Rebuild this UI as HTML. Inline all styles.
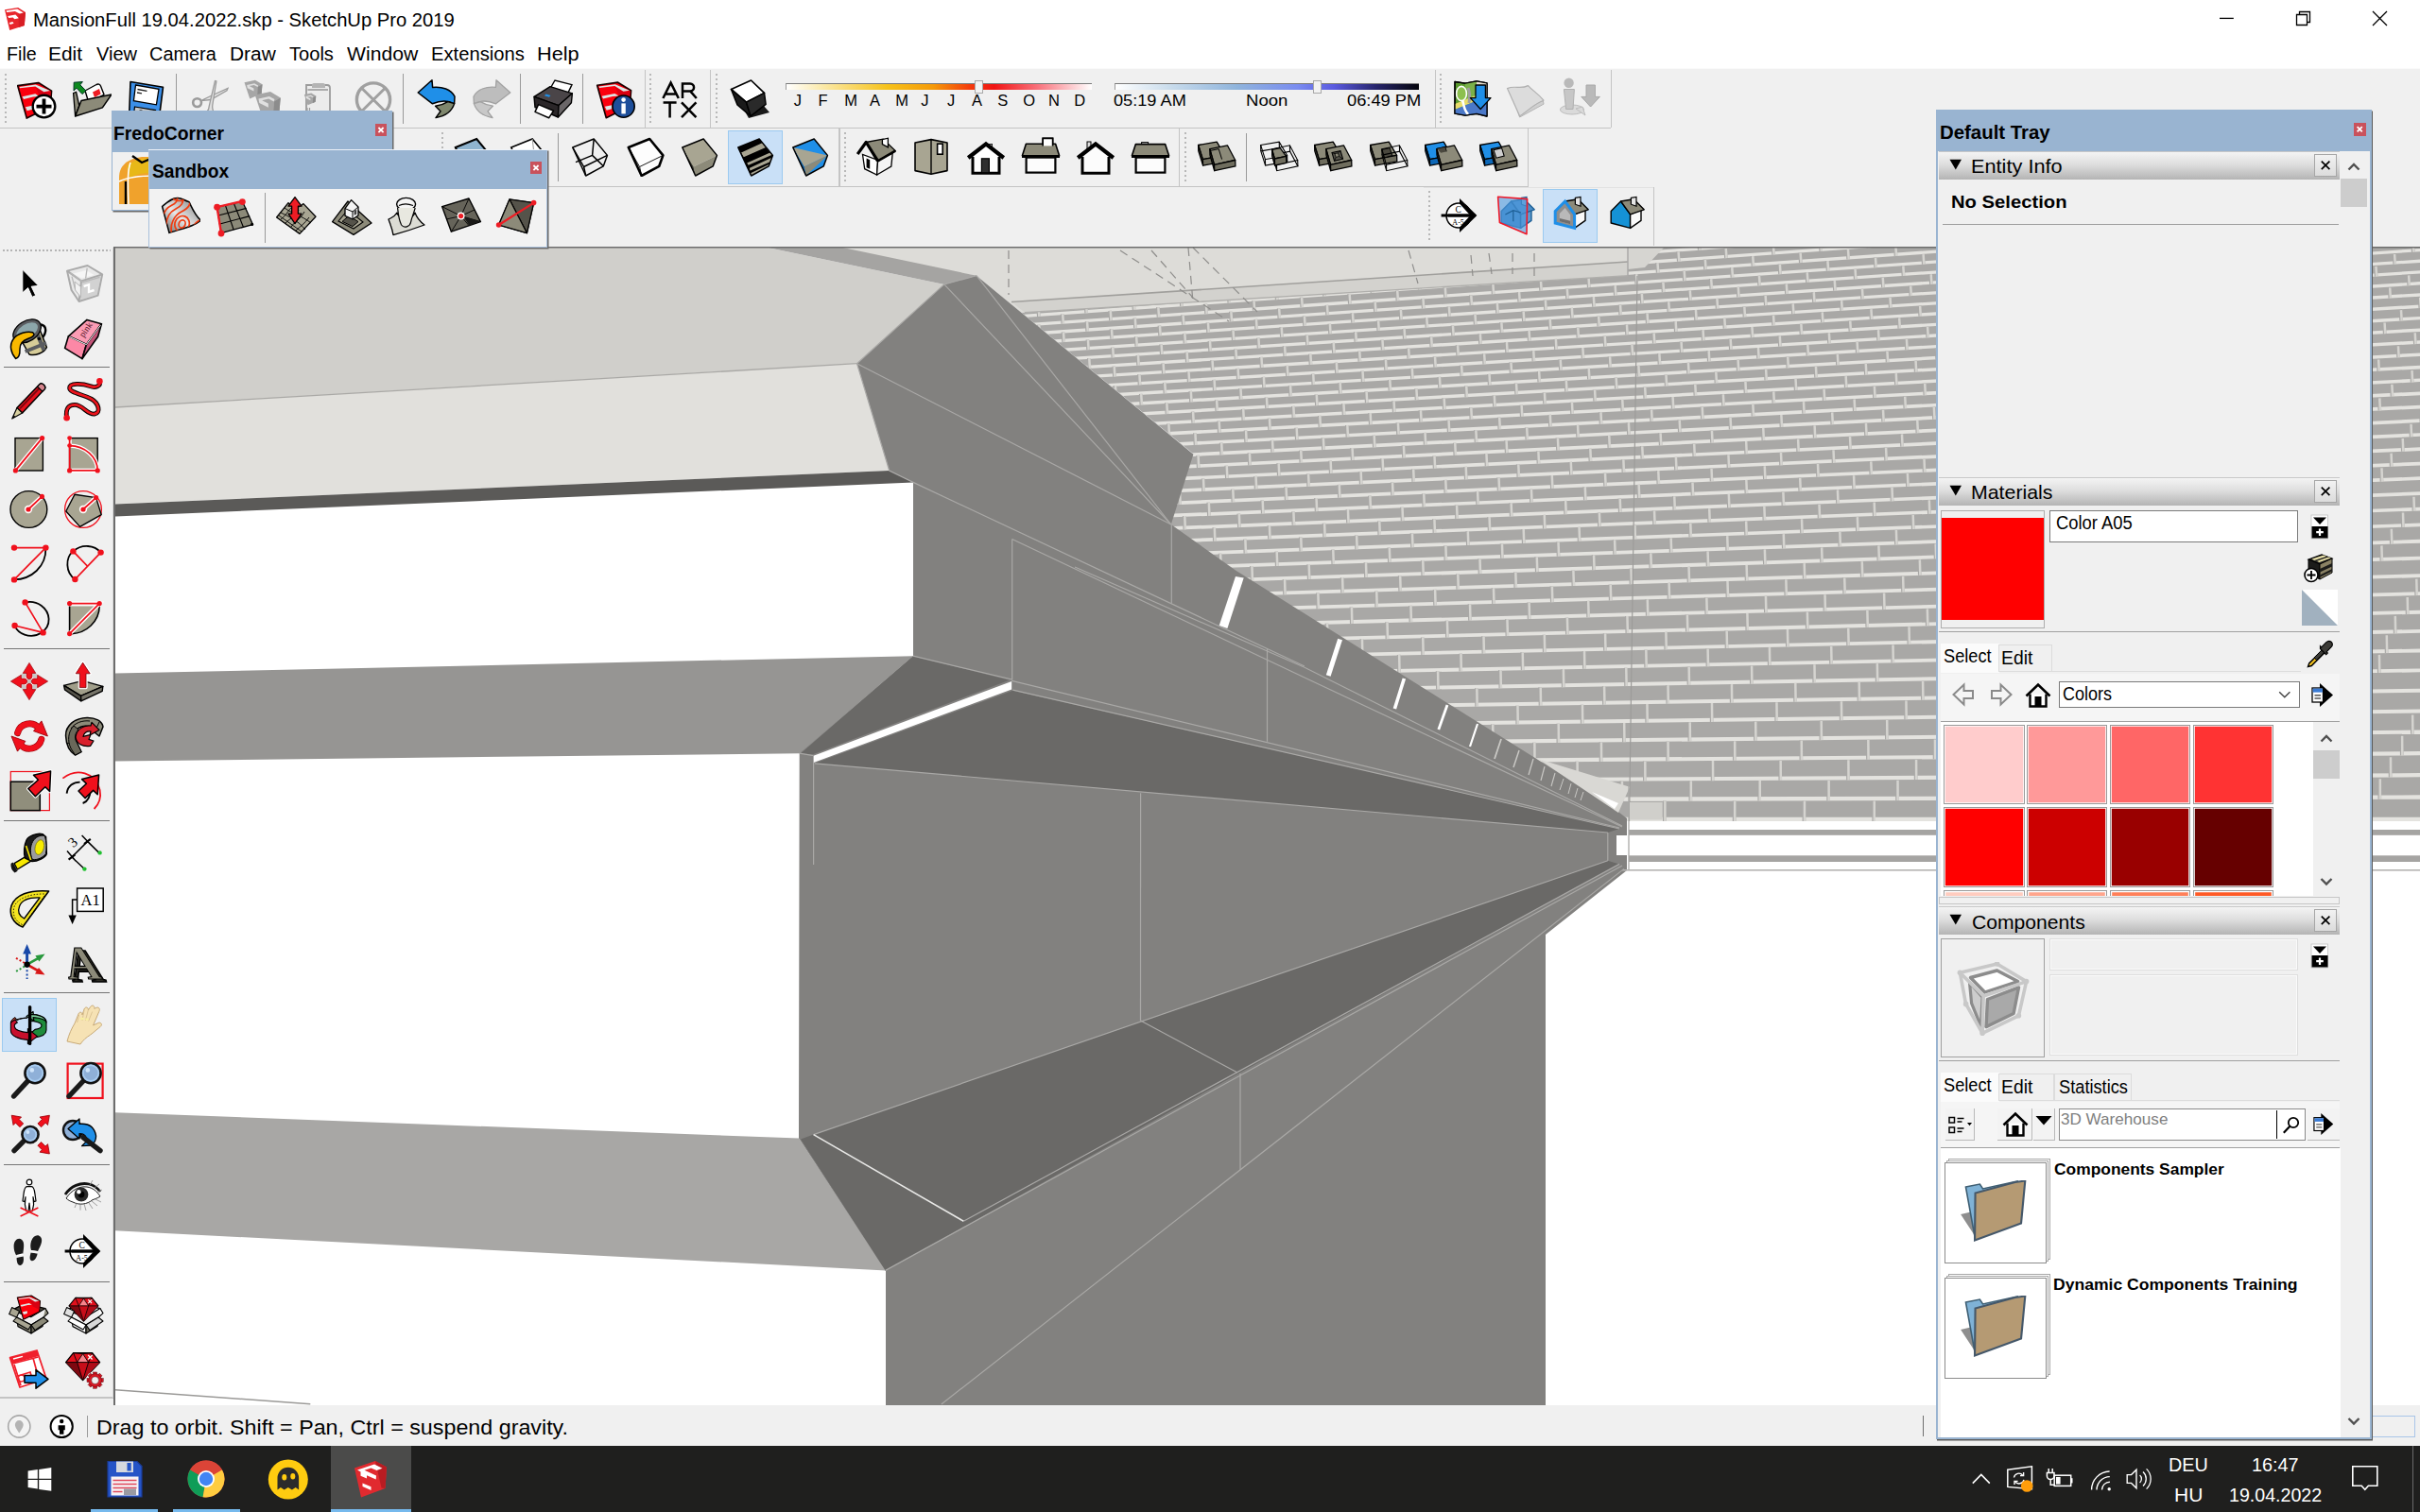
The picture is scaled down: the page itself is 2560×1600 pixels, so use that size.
<!DOCTYPE html>
<html><head><meta charset="utf-8"><title>MansionFull 19.04.2022.skp - SketchUp Pro 2019</title>
<style>
html,body{margin:0;padding:0;background:#f0f0f0;}
body{width:2560px;height:1600px;overflow:hidden;position:relative;font-family:"Liberation Sans",sans-serif;}
#root{position:absolute;left:0;top:0;width:2560px;height:1600px;overflow:hidden;background:#f0f0f0;}
.b{position:absolute;box-sizing:border-box;display:block;}
.t{position:absolute;white-space:nowrap;line-height:1;transform-origin:0 50%;display:inline-block;}
</style></head><body><div id="root">
<div class="b" style="left:0.0px;top:0.0px;width:2560.0px;height:72.0px;background:#ffffff;"></div>
<span class="t" style="left:35.08px;top:11.3px;font-size:20.5px;color:#000;transform:scaleX(0.9854);">MansionFull 19.04.2022.skp - SketchUp Pro 2019</span>
<span class="t" style="left:6.83px;top:47.2px;font-size:20.5px;color:#000;transform:scaleX(0.9592);">File</span>
<span class="t" style="left:50.93px;top:47.2px;font-size:20.5px;color:#000;transform:scaleX(1.0204);">Edit</span>
<span class="t" style="left:101.90px;top:47.2px;font-size:20.5px;color:#000;transform:scaleX(0.9779);">View</span>
<span class="t" style="left:158.00px;top:47.2px;font-size:20.5px;color:#000;transform:scaleX(0.9714);">Camera</span>
<span class="t" style="left:243.03px;top:47.2px;font-size:20.5px;color:#000;transform:scaleX(1.0189);">Draw</span>
<span class="t" style="left:306.20px;top:47.2px;font-size:20.5px;color:#000;transform:scaleX(0.9799);">Tools</span>
<span class="t" style="left:367.39px;top:47.2px;font-size:20.5px;color:#000;transform:scaleX(1.0305);">Window</span>
<span class="t" style="left:456.08px;top:47.2px;font-size:20.5px;color:#000;transform:scaleX(0.9858);">Extensions</span>
<span class="t" style="left:567.86px;top:47.2px;font-size:20.5px;color:#000;transform:scaleX(1.0588);">Help</span>
<svg class="b" style="left:0.0px;top:0.0px;" width="34" height="40" viewBox="0 0 34 40"><path d="M5 10.2l14.1-2.3 7.9 5.2-1.2 13.9L10.2 32z" fill="#e8262c"/><path d="M19.6 14.6l7.4-1.5-1.2 13.9-6 1.9z" fill="#d81e24"/><path d="M6.4 11.2l12-1.8 6.4 4-4 1.2-4.9-2.7-8.7 1z" fill="#fff"/><path d="M8.2 17.1l8.2-1.5 3.4 3.7-4.4 1-1.8-1.9-4.4.7z" fill="#fff"/><path d="M9.9 24.1l3.5-1 1.2 1.7-3.9 1.2z" fill="#fff"/></svg>
<svg class="b" style="left:2330.0px;top:0.0px;" width="230" height="44" viewBox="0 0 230 44"><g stroke="#000" stroke-width="1.3" fill="none"><path d="M18 19.4h14.8"/><path d="M99.5 15.5h11v11h-11z M102.5 15.5v-3h11v11h-3"/><path d="M180 12l15 15M195 12l-15 15"/></g></svg>
<svg class="b" style="left:120.0px;top:261.0px;" width="2440" height="1226" viewBox="120 261 2440 1226"><rect x="120" y="261" width="2440" height="1226" fill="#fff"/><clipPath id="tc"><polygon points="1033,291.7 1080,330.6 1083.8,330.6 1722,291.6 1722,262 2560,262 2560,869 1690,869 1230,560 1262,480"/></clipPath><g clip-path="url(#tc)"><rect x="1000" y="255" width="1560" height="614" fill="#a9a8a6"/><g stroke="#e4e3df" fill="none"><path d="M1030.0 866.9L2562.0 866.9" stroke-width="4.3"/><path d="M1030.0 847.4L2562.0 843.5" stroke-width="4.3"/><path d="M1030.0 828.1L2562.0 820.2" stroke-width="4.2"/><path d="M1030.0 809.0L2562.0 797.2" stroke-width="4.2"/><path d="M1030.0 790.2L2562.0 774.6" stroke-width="4.1"/><path d="M1030.0 771.8L2562.0 752.4" stroke-width="4.0"/><path d="M1030.0 753.8L2562.0 730.7" stroke-width="4.0"/><path d="M1030.0 736.1L2562.0 709.3" stroke-width="3.9"/><path d="M1030.0 718.7L2562.0 688.4" stroke-width="3.9"/><path d="M1030.0 701.6L2562.0 667.8" stroke-width="3.8"/><path d="M1030.0 684.9L2562.0 647.7" stroke-width="3.8"/><path d="M1030.0 668.6L2562.0 628.1" stroke-width="3.8"/><path d="M1030.0 652.8L2562.0 609.1" stroke-width="3.8"/><path d="M1030.0 637.5L2562.0 590.6" stroke-width="3.8"/><path d="M1030.0 622.6L2562.0 572.7" stroke-width="3.8"/><path d="M1030.0 608.2L2562.0 555.3" stroke-width="3.7"/><path d="M1030.0 594.2L2562.0 538.5" stroke-width="3.7"/><path d="M1030.0 580.6L2562.0 522.1" stroke-width="3.7"/><path d="M1030.0 567.4L2562.0 506.1" stroke-width="3.7"/><path d="M1030.0 554.3L2562.0 490.5" stroke-width="3.7"/><path d="M1030.0 541.6L2562.0 475.1" stroke-width="3.7"/><path d="M1030.0 529.0L2562.0 459.9" stroke-width="3.7"/><path d="M1030.0 516.7L2562.0 445.1" stroke-width="3.7"/><path d="M1030.0 504.6L2562.0 430.5" stroke-width="3.7"/><path d="M1030.0 492.7L2562.0 416.2" stroke-width="3.7"/><path d="M1030.0 481.1L2562.0 402.2" stroke-width="3.6"/><path d="M1030.0 469.7L2562.0 388.5" stroke-width="3.6"/><path d="M1030.0 458.6L2562.0 375.1" stroke-width="3.5"/><path d="M1030.0 447.7L2562.0 362.0" stroke-width="3.5"/><path d="M1030.0 437.0L2562.0 349.1" stroke-width="3.5"/><path d="M1030.0 426.5L2562.0 336.5" stroke-width="3.4"/><path d="M1030.0 416.2L2562.0 324.1" stroke-width="3.4"/><path d="M1030.0 406.0L2562.0 311.8" stroke-width="3.4"/><path d="M1030.0 396.0L2562.0 299.7" stroke-width="3.4"/><path d="M1030.0 386.1L2562.0 287.8" stroke-width="3.3"/><path d="M1030.0 376.4L2562.0 276.1" stroke-width="3.3"/><path d="M1030.0 366.7L2562.0 264.5" stroke-width="3.3"/><path d="M1030.0 357.2L2562.0 253.0" stroke-width="3.3"/><path d="M1030.0 347.6L2562.0 241.5" stroke-width="3.3"/><path d="M1030.0 338.1L2562.0 230.0" stroke-width="3.3"/><path d="M1030.0 328.6L2562.0 218.6" stroke-width="3.3"/><path d="M1030.0 319.2L2562.0 207.2" stroke-width="3.3"/><path d="M1030.0 309.8L2562.0 195.9" stroke-width="3.3"/><path d="M1030.0 300.4L2562.0 184.6" stroke-width="3.3"/><path d="M1030.0 291.0L2562.0 173.3" stroke-width="3.3"/><path d="M1030.0 281.7L2562.0 162.1" stroke-width="3.3"/><path d="M1030.0 272.4L2562.0 150.9" stroke-width="3.3"/><path d="M1030.0 263.2L2562.0 139.8" stroke-width="3.3"/><path d="M1030.0 254.0L2562.0 128.7" stroke-width="3.3"/><path d="M1030.0 244.8L2562.0 117.6" stroke-width="3.3"/><path d="M1030.0 235.6L2562.0 106.6" stroke-width="3.3"/></g><g fill="none" stroke="#a9a8a6"><path d="M1030.0 858.3L2562.0 858.3" stroke-width="21.4" stroke-dasharray="3.6 70.2" stroke-dashoffset="9.0"/><path d="M1030.0 838.9L2562.0 834.9" stroke-width="21.3" stroke-dasharray="3.6 69.3" stroke-dashoffset="45.4"/><path d="M1030.0 819.7L2562.0 811.7" stroke-width="21.1" stroke-dasharray="3.6 68.1" stroke-dashoffset="9.0"/><path d="M1030.0 800.7L2562.0 788.9" stroke-width="20.7" stroke-dasharray="3.6 67.0" stroke-dashoffset="44.3"/><path d="M1030.0 782.1L2562.0 766.5" stroke-width="20.3" stroke-dasharray="3.6 65.9" stroke-dashoffset="9.0"/><path d="M1030.0 763.9L2562.0 744.5" stroke-width="19.9" stroke-dasharray="3.6 64.9" stroke-dashoffset="43.2"/><path d="M1030.0 746.0L2562.0 722.9" stroke-width="19.6" stroke-dasharray="3.6 63.8" stroke-dashoffset="9.0"/><path d="M1030.0 728.4L2562.0 701.7" stroke-width="19.2" stroke-dasharray="3.6 62.8" stroke-dashoffset="42.2"/><path d="M1030.0 711.2L2562.0 680.9" stroke-width="18.8" stroke-dasharray="3.6 61.7" stroke-dashoffset="9.0"/><path d="M1030.0 694.3L2562.0 660.5" stroke-width="18.5" stroke-dasharray="3.6 60.7" stroke-dashoffset="41.2"/><path d="M1030.0 677.8L2562.0 640.6" stroke-width="17.9" stroke-dasharray="3.6 59.9" stroke-dashoffset="9.0"/><path d="M1030.0 661.8L2562.0 621.2" stroke-width="17.4" stroke-dasharray="3.6 59.0" stroke-dashoffset="40.3"/><path d="M1030.0 646.3L2562.0 602.5" stroke-width="16.9" stroke-dasharray="3.6 58.3" stroke-dashoffset="9.0"/><path d="M1030.0 631.2L2562.0 584.3" stroke-width="16.4" stroke-dasharray="3.6 57.5" stroke-dashoffset="39.5"/><path d="M1030.0 616.6L2562.0 566.6" stroke-width="15.9" stroke-dasharray="3.6 56.7" stroke-dashoffset="9.0"/><path d="M1030.0 602.4L2562.0 549.5" stroke-width="15.4" stroke-dasharray="3.6 56.0" stroke-dashoffset="38.8"/><path d="M1030.0 588.6L2562.0 532.9" stroke-width="15.0" stroke-dasharray="3.6 55.3" stroke-dashoffset="9.0"/><path d="M1030.0 575.2L2562.0 516.7" stroke-width="14.6" stroke-dasharray="3.6 54.6" stroke-dashoffset="38.1"/><path d="M1030.0 562.1L2562.0 500.8" stroke-width="14.4" stroke-dasharray="3.6 54.0" stroke-dashoffset="9.0"/><path d="M1030.0 549.2L2562.0 485.3" stroke-width="14.1" stroke-dasharray="3.6 53.3" stroke-dashoffset="37.5"/><path d="M1030.0 536.5L2562.0 470.0" stroke-width="13.8" stroke-dasharray="3.6 52.7" stroke-dashoffset="9.0"/><path d="M1030.0 524.1L2562.0 455.0" stroke-width="13.6" stroke-dasharray="3.6 52.0" stroke-dashoffset="36.8"/><path d="M1030.0 511.9L2562.0 440.3" stroke-width="13.3" stroke-dasharray="3.6 51.4" stroke-dashoffset="9.0"/><path d="M1030.0 499.9L2562.0 425.8" stroke-width="13.1" stroke-dasharray="3.6 50.8" stroke-dashoffset="36.2"/><path d="M1030.0 488.1L2562.0 411.6" stroke-width="12.8" stroke-dasharray="3.6 50.3" stroke-dashoffset="9.0"/><path d="M1030.0 476.6L2562.0 397.8" stroke-width="12.6" stroke-dasharray="3.6 50.1" stroke-dashoffset="35.8"/><path d="M1030.0 465.4L2562.0 384.2" stroke-width="12.3" stroke-dasharray="3.6 49.8" stroke-dashoffset="9.0"/><path d="M1030.0 454.3L2562.0 370.9" stroke-width="12.0" stroke-dasharray="3.6 49.6" stroke-dashoffset="35.6"/><path d="M1030.0 443.5L2562.0 357.8" stroke-width="11.8" stroke-dasharray="3.6 49.3" stroke-dashoffset="9.0"/><path d="M1030.0 432.9L2562.0 345.1" stroke-width="11.6" stroke-dasharray="3.6 49.1" stroke-dashoffset="35.3"/><path d="M1030.0 422.5L2562.0 332.5" stroke-width="11.4" stroke-dasharray="3.6 48.8" stroke-dashoffset="9.0"/><path d="M1030.0 412.3L2562.0 320.2" stroke-width="11.2" stroke-dasharray="3.6 48.6" stroke-dashoffset="35.1"/><path d="M1030.0 402.2L2562.0 308.0" stroke-width="11.1" stroke-dasharray="3.6 48.4" stroke-dashoffset="9.0"/><path d="M1030.0 392.2L2562.0 295.9" stroke-width="10.9" stroke-dasharray="3.6 48.2" stroke-dashoffset="34.9"/><path d="M1030.0 382.4L2562.0 284.1" stroke-width="10.8" stroke-dasharray="3.6 47.9" stroke-dashoffset="9.0"/><path d="M1030.0 372.7L2562.0 272.4" stroke-width="10.6" stroke-dasharray="3.6 47.7" stroke-dashoffset="34.7"/><path d="M1030.0 363.1L2562.0 260.9" stroke-width="10.6" stroke-dasharray="3.6 47.5" stroke-dashoffset="9.0"/><path d="M1030.0 353.5L2562.0 249.3" stroke-width="10.5" stroke-dasharray="3.6 47.3" stroke-dashoffset="34.4"/><path d="M1030.0 344.0L2562.0 237.9" stroke-width="10.5" stroke-dasharray="3.6 47.1" stroke-dashoffset="9.0"/><path d="M1030.0 334.5L2562.0 226.4" stroke-width="10.5" stroke-dasharray="3.6 46.9" stroke-dashoffset="34.2"/><path d="M1030.0 325.1L2562.0 215.0" stroke-width="10.4" stroke-dasharray="3.6 46.7" stroke-dashoffset="9.0"/><path d="M1030.0 315.6L2562.0 203.7" stroke-width="10.4" stroke-dasharray="3.6 46.5" stroke-dashoffset="34.0"/><path d="M1030.0 306.2L2562.0 192.3" stroke-width="10.3" stroke-dasharray="3.6 46.3" stroke-dashoffset="9.0"/><path d="M1030.0 296.9L2562.0 181.1" stroke-width="10.3" stroke-dasharray="3.6 46.1" stroke-dashoffset="33.8"/><path d="M1030.0 287.5L2562.0 169.8" stroke-width="10.3" stroke-dasharray="3.6 45.9" stroke-dashoffset="9.0"/><path d="M1030.0 278.2L2562.0 158.6" stroke-width="10.2" stroke-dasharray="3.6 45.7" stroke-dashoffset="33.7"/><path d="M1030.0 269.0L2562.0 147.5" stroke-width="10.2" stroke-dasharray="3.6 45.5" stroke-dashoffset="9.0"/><path d="M1030.0 259.7L2562.0 136.4" stroke-width="10.2" stroke-dasharray="3.6 45.3" stroke-dashoffset="33.5"/><path d="M1030.0 250.6L2562.0 125.3" stroke-width="10.1" stroke-dasharray="3.6 45.2" stroke-dashoffset="9.0"/><path d="M1030.0 241.4L2562.0 114.2" stroke-width="10.1" stroke-dasharray="3.6 45.0" stroke-dashoffset="33.3"/><path d="M1030.0 232.3L2562.0 103.2" stroke-width="10.1" stroke-dasharray="3.6 44.8" stroke-dashoffset="9.0"/></g><g fill="none" stroke="#d5d4d0"><path d="M1030.0 858.3L2562.0 858.3" stroke-width="21.4" stroke-dasharray="2.5 71.3" stroke-dashoffset="7.9"/><path d="M1030.0 838.9L2562.0 834.9" stroke-width="21.3" stroke-dasharray="2.5 70.4" stroke-dashoffset="44.3"/><path d="M1030.0 819.7L2562.0 811.7" stroke-width="21.1" stroke-dasharray="2.5 69.2" stroke-dashoffset="7.9"/><path d="M1030.0 800.7L2562.0 788.9" stroke-width="20.7" stroke-dasharray="2.5 68.1" stroke-dashoffset="43.2"/><path d="M1030.0 782.1L2562.0 766.5" stroke-width="20.3" stroke-dasharray="2.5 67.0" stroke-dashoffset="7.9"/><path d="M1030.0 763.9L2562.0 744.5" stroke-width="19.9" stroke-dasharray="2.5 66.0" stroke-dashoffset="42.1"/><path d="M1030.0 746.0L2562.0 722.9" stroke-width="19.6" stroke-dasharray="2.5 64.9" stroke-dashoffset="7.9"/><path d="M1030.0 728.4L2562.0 701.7" stroke-width="19.2" stroke-dasharray="2.5 63.9" stroke-dashoffset="41.1"/><path d="M1030.0 711.2L2562.0 680.9" stroke-width="18.8" stroke-dasharray="2.5 62.8" stroke-dashoffset="7.9"/><path d="M1030.0 694.3L2562.0 660.5" stroke-width="18.5" stroke-dasharray="2.5 61.8" stroke-dashoffset="40.1"/><path d="M1030.0 677.8L2562.0 640.6" stroke-width="17.9" stroke-dasharray="2.5 61.0" stroke-dashoffset="7.9"/><path d="M1030.0 661.8L2562.0 621.2" stroke-width="17.4" stroke-dasharray="2.5 60.1" stroke-dashoffset="39.2"/><path d="M1030.0 646.3L2562.0 602.5" stroke-width="16.9" stroke-dasharray="2.5 59.4" stroke-dashoffset="7.9"/><path d="M1030.0 631.2L2562.0 584.3" stroke-width="16.4" stroke-dasharray="2.5 58.6" stroke-dashoffset="38.4"/><path d="M1030.0 616.6L2562.0 566.6" stroke-width="15.9" stroke-dasharray="2.5 57.8" stroke-dashoffset="7.9"/><path d="M1030.0 602.4L2562.0 549.5" stroke-width="15.4" stroke-dasharray="2.5 57.1" stroke-dashoffset="37.7"/><path d="M1030.0 588.6L2562.0 532.9" stroke-width="15.0" stroke-dasharray="2.5 56.4" stroke-dashoffset="7.9"/><path d="M1030.0 575.2L2562.0 516.7" stroke-width="14.6" stroke-dasharray="2.5 55.7" stroke-dashoffset="37.0"/><path d="M1030.0 562.1L2562.0 500.8" stroke-width="14.4" stroke-dasharray="2.5 55.1" stroke-dashoffset="7.9"/><path d="M1030.0 549.2L2562.0 485.3" stroke-width="14.1" stroke-dasharray="2.5 54.4" stroke-dashoffset="36.4"/><path d="M1030.0 536.5L2562.0 470.0" stroke-width="13.8" stroke-dasharray="2.5 53.8" stroke-dashoffset="7.9"/><path d="M1030.0 524.1L2562.0 455.0" stroke-width="13.6" stroke-dasharray="2.5 53.1" stroke-dashoffset="35.7"/><path d="M1030.0 511.9L2562.0 440.3" stroke-width="13.3" stroke-dasharray="2.5 52.5" stroke-dashoffset="7.9"/><path d="M1030.0 499.9L2562.0 425.8" stroke-width="13.1" stroke-dasharray="2.5 51.9" stroke-dashoffset="35.1"/><path d="M1030.0 488.1L2562.0 411.6" stroke-width="12.8" stroke-dasharray="2.5 51.4" stroke-dashoffset="7.9"/><path d="M1030.0 476.6L2562.0 397.8" stroke-width="12.6" stroke-dasharray="2.5 51.2" stroke-dashoffset="34.7"/><path d="M1030.0 465.4L2562.0 384.2" stroke-width="12.3" stroke-dasharray="2.5 50.9" stroke-dashoffset="7.9"/><path d="M1030.0 454.3L2562.0 370.9" stroke-width="12.0" stroke-dasharray="2.5 50.7" stroke-dashoffset="34.5"/><path d="M1030.0 443.5L2562.0 357.8" stroke-width="11.8" stroke-dasharray="2.5 50.4" stroke-dashoffset="7.9"/><path d="M1030.0 432.9L2562.0 345.1" stroke-width="11.6" stroke-dasharray="2.5 50.2" stroke-dashoffset="34.2"/><path d="M1030.0 422.5L2562.0 332.5" stroke-width="11.4" stroke-dasharray="2.5 49.9" stroke-dashoffset="7.9"/><path d="M1030.0 412.3L2562.0 320.2" stroke-width="11.2" stroke-dasharray="2.5 49.7" stroke-dashoffset="34.0"/><path d="M1030.0 402.2L2562.0 308.0" stroke-width="11.1" stroke-dasharray="2.5 49.5" stroke-dashoffset="7.9"/><path d="M1030.0 392.2L2562.0 295.9" stroke-width="10.9" stroke-dasharray="2.5 49.3" stroke-dashoffset="33.8"/><path d="M1030.0 382.4L2562.0 284.1" stroke-width="10.8" stroke-dasharray="2.5 49.0" stroke-dashoffset="7.9"/><path d="M1030.0 372.7L2562.0 272.4" stroke-width="10.6" stroke-dasharray="2.5 48.8" stroke-dashoffset="33.6"/><path d="M1030.0 363.1L2562.0 260.9" stroke-width="10.6" stroke-dasharray="2.5 48.6" stroke-dashoffset="7.9"/><path d="M1030.0 353.5L2562.0 249.3" stroke-width="10.5" stroke-dasharray="2.5 48.4" stroke-dashoffset="33.3"/><path d="M1030.0 344.0L2562.0 237.9" stroke-width="10.5" stroke-dasharray="2.5 48.2" stroke-dashoffset="7.9"/><path d="M1030.0 334.5L2562.0 226.4" stroke-width="10.5" stroke-dasharray="2.5 48.0" stroke-dashoffset="33.1"/><path d="M1030.0 325.1L2562.0 215.0" stroke-width="10.4" stroke-dasharray="2.5 47.8" stroke-dashoffset="7.9"/><path d="M1030.0 315.6L2562.0 203.7" stroke-width="10.4" stroke-dasharray="2.5 47.6" stroke-dashoffset="32.9"/><path d="M1030.0 306.2L2562.0 192.3" stroke-width="10.3" stroke-dasharray="2.5 47.4" stroke-dashoffset="7.9"/><path d="M1030.0 296.9L2562.0 181.1" stroke-width="10.3" stroke-dasharray="2.5 47.2" stroke-dashoffset="32.7"/><path d="M1030.0 287.5L2562.0 169.8" stroke-width="10.3" stroke-dasharray="2.5 47.0" stroke-dashoffset="7.9"/><path d="M1030.0 278.2L2562.0 158.6" stroke-width="10.2" stroke-dasharray="2.5 46.8" stroke-dashoffset="32.6"/><path d="M1030.0 269.0L2562.0 147.5" stroke-width="10.2" stroke-dasharray="2.5 46.6" stroke-dashoffset="7.9"/><path d="M1030.0 259.7L2562.0 136.4" stroke-width="10.2" stroke-dasharray="2.5 46.4" stroke-dashoffset="32.4"/><path d="M1030.0 250.6L2562.0 125.3" stroke-width="10.1" stroke-dasharray="2.5 46.3" stroke-dashoffset="7.9"/><path d="M1030.0 241.4L2562.0 114.2" stroke-width="10.1" stroke-dasharray="2.5 46.1" stroke-dashoffset="32.2"/><path d="M1030.0 232.3L2562.0 103.2" stroke-width="10.1" stroke-dasharray="2.5 45.9" stroke-dashoffset="7.9"/></g></g><polyline points="1732.0,292.0 1723.5,869.0" fill="none" stroke="#9d9c9a" stroke-width="1.2" /><polygon points="850.0,262.0 1722.0,262.0 1722.0,291.6 1083.8,330.6 1080.0,330.6 1033.0,291.7" fill="#dddcd8" /><polygon points="1070.0,319.5 1722.0,277.0 1722.0,291.6 1083.8,330.6" fill="#d3d2ce" /><polyline points="1070.0,319.5 1722.0,277.0" fill="none" stroke="#a09f9c" stroke-width="1.6" /><polyline points="1083.8,330.6 1722.0,291.6" fill="none" stroke="#b0afac" stroke-width="1.4" /><polygon points="1722.0,262.0 1760.0,262.0 1740.0,283.0 1722.0,285.0" fill="#d6d5d1" /><polyline points="1722.0,262.0 1722.0,292.0" fill="none" stroke="#aaa9a7" stroke-width="1.5" /><polyline points="1067.0,265.0 1067.0,312.0" fill="none" stroke="#8f8e8c" stroke-width="1.2" stroke-dasharray="9 6"/><polyline points="1185.0,265.0 1300.0,340.0" fill="none" stroke="#8f8e8c" stroke-width="1.2" stroke-dasharray="9 6"/><polyline points="1218.0,265.0 1262.0,315.0" fill="none" stroke="#8f8e8c" stroke-width="1.2" stroke-dasharray="9 6"/><polyline points="1257.0,262.0 1262.0,320.0" fill="none" stroke="#8f8e8c" stroke-width="1.2" stroke-dasharray="9 6"/><polyline points="1262.0,262.0 1330.0,330.0" fill="none" stroke="#8f8e8c" stroke-width="1.2" stroke-dasharray="9 6"/><polyline points="1490.0,265.0 1500.0,300.0" fill="none" stroke="#8f8e8c" stroke-width="1.2" stroke-dasharray="9 6"/><polyline points="1556.0,270.0 1558.0,292.0" fill="none" stroke="#8f8e8c" stroke-width="1.2" stroke-dasharray="9 6"/><polyline points="1575.0,268.0 1578.0,290.0" fill="none" stroke="#8f8e8c" stroke-width="1.2" stroke-dasharray="9 6"/><polyline points="1600.0,268.0 1600.0,290.0" fill="none" stroke="#8f8e8c" stroke-width="1.2" stroke-dasharray="9 6"/><polyline points="1623.0,268.0 1623.0,292.0" fill="none" stroke="#8f8e8c" stroke-width="1.2" stroke-dasharray="9 6"/><polygon points="122.0,262.0 812.0,262.0 998.8,300.9 906.5,384.7 122.0,431.0" fill="#d0cfcb" /><polygon points="812.2,262.0 891.6,262.0 1033.0,291.7 998.8,300.9" fill="#a5a4a2" /><polygon points="122.0,431.0 906.5,384.7 940.7,498.0 122.0,533.6" fill="#e1e0dc" /><polyline points="122.0,431.0 906.5,384.7" fill="none" stroke="#aaa9a6" stroke-width="1.3" /><polygon points="122.0,533.6 940.7,498.0 966.0,510.4 122.0,546.5" fill="#5b5a58" /><polygon points="122.0,712.6 966.0,694.2 846.4,797.2 122.0,805.4" fill="#969593" /><polygon points="122.0,1177.3 845.0,1204.5 937.2,1344.4 122.0,1302.2" fill="#a8a7a5" /><polyline points="122.0,1470.8 328.3,1485.7" fill="none" stroke="#9a9997" stroke-width="1.5" /><polygon points="998.8,300.9 1033.0,291.7 1262.4,480.7 1238.8,555.0 1307.0,603.5 1627.0,804.0 1700.0,850.0 1721.0,866.0 1721.0,921.0 1635.0,989.0 1635.0,1487.0 937.0,1487.0 937.0,1345.0 845.0,1204.5 845.7,797.2 966.0,694.2 966.0,510.4 940.7,498.0 906.5,384.7" fill="#82817f" /><polygon points="1627.0,803.0 1724.0,832.8 1712.0,860.0" fill="#d9d8d4" /><polygon points="1684.0,838.0 1712.0,850.0 1708.0,856.0" fill="#ffffff" /><polygon points="1724.0,849.0 1758.7,849.0 1758.7,867.5 1724.0,867.5" fill="#d0cfcb" /><polygon points="966.0,694.2 1067.7,719.8 859.4,798.4 847.0,797.2" fill="#6a6967" /><polygon points="861.8,807.8 865.6,806.3 1071.4,730.7 1713.0,877.0 1700.8,881.0" fill="#6a6967" /><polygon points="847.0,1205.5 860.6,1200.6 1700.8,910.7 1713.0,914.4 1310.0,1136.0 936.7,1344.4" fill="#6a6967" /><polygon points="1070.2,721.0 1070.2,729.5 860.6,807.0 860.6,799.7" fill="#fff" /><polygon points="1307.0,610.0 1315.7,611.5 1298.4,665.0 1289.7,662.0" fill="#fff" /><polyline points="1417.6,676.5 1405.2,715.0" fill="none" stroke="#ffffff" stroke-width="5" /><polyline points="1485.4,718.0 1475.4,750.0" fill="none" stroke="#ffffff" stroke-width="3.6" /><polyline points="1531.0,746.0 1521.8,772.0" fill="none" stroke="#ffffff" stroke-width="2.8" /><polyline points="1563.0,766.0 1555.0,790.0" fill="none" stroke="#ffffff" stroke-width="2.2" /><polyline points="1588.0,782.0 1581.0,803.0" fill="none" stroke="#c9c8c5" stroke-width="1.8" /><polyline points="1607.0,794.0 1601.0,812.0" fill="none" stroke="#c9c8c5" stroke-width="1.5" /><polyline points="1622.0,803.0 1617.0,820.0" fill="none" stroke="#c9c8c5" stroke-width="1.3" /><polyline points="1634.0,811.0 1630.0,826.0" fill="none" stroke="#c9c8c5" stroke-width="1.2" /><polyline points="1645.0,818.0 1641.0,832.0" fill="none" stroke="#c9c8c5" stroke-width="1.1" /><polyline points="1654.0,824.0 1650.0,836.0" fill="none" stroke="#c9c8c5" stroke-width="1" /><polyline points="1662.0,829.0 1659.0,840.0" fill="none" stroke="#c9c8c5" stroke-width="1" /><polyline points="1669.0,834.0 1666.0,844.0" fill="none" stroke="#c9c8c5" stroke-width="1" /><polyline points="1675.0,838.0 1672.0,847.0" fill="none" stroke="#c9c8c5" stroke-width="1" /><polygon points="1710.0,884.0 1723.0,884.0 1723.0,905.0 1710.0,905.0" fill="#fff" /><rect x="1723" y="878" width="840" height="5.8" fill="#a5a4a2"/><rect x="1723" y="905.3" width="840" height="6.7" fill="#a5a4a2"/><rect x="1716" y="920" width="850" height="1.6" fill="#b5b4b2"/><polyline points="1723.0,827.0 1723.0,920.6" fill="none" stroke="#aaa9a7" stroke-width="1.3" /><polyline points="906.5,384.7 1238.8,555.0" fill="none" stroke="#a9a8a6" stroke-width="1.2" /><polyline points="998.8,300.9 1238.8,555.0" fill="none" stroke="#a9a8a6" stroke-width="1.2" /><polyline points="1033.0,291.7 1238.8,555.0" fill="none" stroke="#a9a8a6" stroke-width="1.2" /><polyline points="998.8,300.9 906.5,384.7 940.7,498.0 966.0,510.4 1380.0,705.0" fill="none" stroke="#a9a8a6" stroke-width="1.2" /><polyline points="998.8,300.9 1033.0,291.7" fill="none" stroke="#a9a8a6" stroke-width="1.2" /><polyline points="1239.3,555.0 1239.3,638.4" fill="none" stroke="#a9a8a6" stroke-width="1.2" /><polyline points="1070.7,570.5 1070.7,719.0 966.0,694.2" fill="none" stroke="#a9a8a6" stroke-width="1.2" /><polyline points="1070.7,570.5 1380.0,717.0" fill="none" stroke="#a9a8a6" stroke-width="1.2" /><polyline points="1137.0,600.0 1380.0,706.3" fill="none" stroke="#a9a8a6" stroke-width="1.2" /><polyline points="1380.0,706.3 1716.0,874.0" fill="none" stroke="#a9a8a6" stroke-width="1.2" /><polyline points="1380.0,717.0 1716.0,875.0" fill="none" stroke="#a9a8a6" stroke-width="1.2" /><polyline points="1070.2,720.3 1713.0,876.0" fill="none" stroke="#a9a8a6" stroke-width="1.2" /><polyline points="1071.4,730.2 1713.0,877.0" fill="none" stroke="#a9a8a6" stroke-width="1.2" /><polyline points="1340.5,686.8 1340.5,784.8" fill="none" stroke="#a9a8a6" stroke-width="1.2" /><polyline points="861.8,807.8 1700.8,881.0" fill="none" stroke="#a9a8a6" stroke-width="1.2" /><polyline points="845.7,797.2 860.6,799.7" fill="none" stroke="#a9a8a6" stroke-width="1.2" /><polyline points="860.6,807.0 860.6,915.0" fill="none" stroke="#a9a8a6" stroke-width="1.2" /><polyline points="1206.6,839.3 1206.5,1080.0" fill="none" stroke="#a9a8a6" stroke-width="1.2" /><polyline points="860.6,1200.6 1700.8,910.7" fill="none" stroke="#a9a8a6" stroke-width="1.2" /><polyline points="1206.5,1080.0 1309.0,1135.0" fill="none" stroke="#a9a8a6" stroke-width="1.2" /><polyline points="1019.3,1292.3 1713.0,914.4" fill="none" stroke="#a9a8a6" stroke-width="1.2" /><polyline points="936.7,1344.4 1716.0,916.0" fill="none" stroke="#a9a8a6" stroke-width="1.2" /><polyline points="1312.0,1136.0 1312.0,1237.8" fill="none" stroke="#a9a8a6" stroke-width="1.2" /><polyline points="995.8,1486.0 1718.0,919.4" fill="none" stroke="#a9a8a6" stroke-width="1.2" /><polyline points="1700.8,881.0 1700.8,910.7" fill="none" stroke="#a9a8a6" stroke-width="1.2" /><polyline points="860.6,1200.6 1019.3,1292.3" fill="none" stroke="#e8e8e6" stroke-width="1.6" /><rect x="120" y="260.5" width="2440" height="2" fill="#6d6d6d"/><rect x="120" y="261" width="2" height="1226" fill="#6d6d6d"/></svg>
<div class="b" style="left:0.0px;top:72.0px;width:2560.0px;height:1.0px;background:#fafafa;"></div>
<div class="b" style="left:0.0px;top:134.6px;width:1704.0px;height:1.3px;background:#c4c4c4;"></div>
<div class="b" style="left:578.0px;top:196.8px;width:1038.5px;height:1.3px;background:#c4c4c4;"></div>
<div class="b" style="left:681.5px;top:74.0px;width:1.2px;height:61.0px;background:#c4c4c4;"></div>
<div class="b" style="left:751.0px;top:74.0px;width:1.2px;height:61.0px;background:#c4c4c4;"></div>
<div class="b" style="left:1517.6px;top:74.0px;width:1.2px;height:61.0px;background:#c4c4c4;"></div>
<div class="b" style="left:1703.6px;top:74.0px;width:1.2px;height:61.0px;background:#c4c4c4;"></div>
<div class="b" style="left:887.4px;top:136.0px;width:1.2px;height:61.0px;background:#c4c4c4;"></div>
<div class="b" style="left:1247.3px;top:136.0px;width:1.2px;height:61.0px;background:#c4c4c4;"></div>
<div class="b" style="left:1615.6px;top:136.0px;width:1.2px;height:61.0px;background:#c4c4c4;"></div>
<div class="b" style="left:1749.0px;top:198.0px;width:1.2px;height:62.0px;background:#c4c4c4;"></div>
<div class="b" style="left:1506.0px;top:197.5px;width:243.0px;height:1.2px;background:#e2e2e2;"></div>
<div class="b" style="left:5.0px;top:78.0px;width:3.0px;height:53.0px;background:repeating-linear-gradient(#b8b8b8 0 2px,transparent 2px 5px);width:2.2px;"></div>
<div class="b" style="left:687.0px;top:78.0px;width:3.0px;height:53.0px;background:repeating-linear-gradient(#b8b8b8 0 2px,transparent 2px 5px);width:2.2px;"></div>
<div class="b" style="left:757.0px;top:78.0px;width:3.0px;height:53.0px;background:repeating-linear-gradient(#b8b8b8 0 2px,transparent 2px 5px);width:2.2px;"></div>
<div class="b" style="left:1523.0px;top:78.0px;width:3.0px;height:53.0px;background:repeating-linear-gradient(#b8b8b8 0 2px,transparent 2px 5px);width:2.2px;"></div>
<div class="b" style="left:467.0px;top:140.0px;width:3.0px;height:54.0px;background:repeating-linear-gradient(#b8b8b8 0 2px,transparent 2px 5px);width:2.2px;"></div>
<div class="b" style="left:893.0px;top:140.0px;width:3.0px;height:54.0px;background:repeating-linear-gradient(#b8b8b8 0 2px,transparent 2px 5px);width:2.2px;"></div>
<div class="b" style="left:1253.0px;top:140.0px;width:3.0px;height:54.0px;background:repeating-linear-gradient(#b8b8b8 0 2px,transparent 2px 5px);width:2.2px;"></div>
<div class="b" style="left:1510.5px;top:202.0px;width:3.0px;height:55.0px;background:repeating-linear-gradient(#b8b8b8 0 2px,transparent 2px 5px);width:2.2px;"></div>
<div class="b" style="left:186.0px;top:78.0px;width:1.0px;height:53.0px;background:#9a9a9a;"></div>
<div class="b" style="left:426.0px;top:78.0px;width:1.0px;height:53.0px;background:#9a9a9a;"></div>
<div class="b" style="left:550.0px;top:78.0px;width:1.0px;height:53.0px;background:#9a9a9a;"></div>
<div class="b" style="left:616.0px;top:78.0px;width:1.0px;height:53.0px;background:#9a9a9a;"></div>
<div class="b" style="left:590.0px;top:141.0px;width:1.0px;height:51.0px;background:#9a9a9a;"></div>
<div class="b" style="left:1318.0px;top:141.0px;width:1.0px;height:51.0px;background:#9a9a9a;"></div>
<svg class="b" style="left:18.0px;top:83.5px;" width="42" height="42" viewBox="0 0 42 42"><g transform="translate(-0.4,2) scale(0.98)"><path d="M1.1 4.7L23.5 1.6l14.2 8.7-1.3 17L10.9 39.9z" fill="#fb000d" stroke="#1a0000" stroke-width="1.7" stroke-linejoin="round"/><path d="M20.1 5.6l9.3 5.8 7.2-.5-.4 13.1-10.2-5z" fill="#d80012"/><path d="M3.1 6l17.4-2.4 15.6 6.7-6.7 1.1-9.3-5.8L3.5 7.5z" fill="#dde6e6"/><path d="M6.1 16.6l14-3 4.4 2.6-6.6.6-10.3 2.6z" fill="#dde6e6"/><path d="M9.4 27.7l7.6-1.4v4l-5.7 1.5z" fill="#dde6e6"/></g><circle cx="28.5" cy="28.6" r="11.8" fill="#fff" stroke="#000" stroke-width="2.4"/><path d="M28.5 20.6v16M20.5 28.6h16" stroke="#000" stroke-width="3.8"/></svg>
<svg class="b" style="left:76.0px;top:83.5px;" width="42" height="42" viewBox="0 0 42 42"><path d="M14 12l12-6.5c2-1 3.6-.4 4.4 1.2L34 16l-16 9z" fill="#fff" stroke="#000" stroke-width="1.4"/><path d="M22 13.5l7-3.4 1.6 5.4-6.6 3.6z" fill="#ee1c24"/><path d="M1.6 14.5l3-1.2 3.2 14.5-4.2 11.2z" fill="#8c8a79" stroke="#000" stroke-width="1.3"/><path d="M3.6 39L10 22.5l32-6.6-9.6 14z" fill="#8c8a79" stroke="#000" stroke-width="1.5" stroke-linejoin="round"/><path d="M2.2 3.2l9.2-.6-2.6 3.2 6 6.2-3.8 3.6-6-6.4-3 2.8z" fill="#0c8a1e" stroke="#032" stroke-width="1"/></svg>
<svg class="b" style="left:134.0px;top:83.5px;" width="42" height="42" viewBox="0 0 42 42"><path d="M4 2.5l34.5 5.8-4.2 33H2.5z" fill="#3b8fe8" stroke="#000" stroke-width="1.6" stroke-linejoin="round"/><path d="M9.5 6l24.5 4.4-2.6 16.4-24-4.2z" fill="#fff" stroke="#000" stroke-width="1.3"/><path d="M11.5 10.5l10 1.8M11 14l5 .9" stroke="#222" stroke-width="1.3"/><path d="M8.5 29l22 3.6-1 8.6H7z" fill="#c9c9c9" stroke="#000" stroke-width="1.2"/><rect x="13" y="32" width="4" height="6" rx="1.6" fill="#555"/></svg>
<svg class="b" style="left:200.0px;top:83.5px;" width="42" height="42" viewBox="0 0 42 42"><circle cx="8.6" cy="24.6" r="4.4" fill="none" stroke="#9b9b9b" stroke-width="2.6"/><path d="M12.6 22.6l9.4-4.6L41 9.5l-1 2.2-17 9.8z" fill="#e4e4e4" stroke="#9b9b9b" stroke-width="1.3"/><path d="M27.5 1.5l1.4.4-4 24.6c-.6 3.6-.2 6 1.6 8.6h-8c2.2-2.6 2.8-4.6 3-8z" fill="#e0e0e0" stroke="#9b9b9b" stroke-width="1.3"/></svg>
<svg class="b" style="left:258.0px;top:83.5px;" width="42" height="42" viewBox="0 0 42 42"><g transform="translate(0,0) scale(0.52)"><path d="M1 6.2L23 1.5l14.5 8.6-1.6 18.6L12 39.2z" fill="#a6a6a6"/><path d="M28.5 15.5l9-5.4-1.6 18.6-8.6 4.6z" fill="#8c8c8c"/><path d="M6 11.5l15.5-3.4 7.5 4.2-1 3.2-7.5-4-9.5 2.2 9 4.6.2 5.6-13-6.2z" fill="#e0e0e0"/></g><g transform="translate(11,12) scale(0.74)"><path d="M1 6.2L23 1.5l14.5 8.6-1.6 18.6L12 39.2z" fill="#a6a6a6"/><path d="M28.5 15.5l9-5.4-1.6 18.6-8.6 4.6z" fill="#8c8c8c"/><path d="M6 11.5l15.5-3.4 7.5 4.2-1 3.2-7.5-4-9.5 2.2 9 4.6.2 5.6-13-6.2z" fill="#e0e0e0"/></g></svg>
<svg class="b" style="left:316.0px;top:83.5px;" width="42" height="42" viewBox="0 0 42 42"><path d="M8 6h22c2 0 3 1 3 3v32H8z" fill="#ececec" stroke="#9b9b9b" stroke-width="1.8"/><path d="M14 6c0-2 2-2 3-2h8c1 0 3 0 3 2v3H14z" fill="#b4b4b4"/><path d="M9.5 11h21.5" stroke="#9b9b9b" stroke-width="1.6"/><g transform="translate(5.5,14) scale(0.34)"><path d="M1 6.2L23 1.5l14.5 8.6-1.6 18.6L12 39.2z" fill="#a6a6a6"/><path d="M28.5 15.5l9-5.4-1.6 18.6-8.6 4.6z" fill="#8c8c8c"/><path d="M6 11.5l15.5-3.4 7.5 4.2-1 3.2-7.5-4-9.5 2.2 9 4.6.2 5.6-13-6.2z" fill="#e0e0e0"/></g><path d="M9 30v10M11.5 30v10" stroke="#9b9b9b" stroke-width="1.2"/><path d="M15 38.5h10" stroke="#9b9b9b" stroke-width="2"/></svg>
<svg class="b" style="left:374.0px;top:83.5px;" width="42" height="42" viewBox="0 0 42 42"><circle cx="21" cy="21.5" r="17.6" fill="none" stroke="#a0a0a0" stroke-width="3.4"/><path d="M8.6 9.2l24.8 24.6M33.4 9.2L8.6 33.8" stroke="#a0a0a0" stroke-width="3"/></svg>
<svg class="b" style="left:440.6px;top:83.5px;" width="42" height="42" viewBox="0 0 42 42"><path d="M1.2 14L16 .8l.6 7.6c10-1 19.6 2 23.4 9.8l-.4 7.6C33 22 24 22.6 16.4 25.8l-.2-.2z" fill="#1f8fe8" stroke="#000" stroke-width="1.5" stroke-linejoin="round"/><path d="M39.6 25.6c-2.6 8.6-9 13-19.6 15l5-6.8-5.4-5.6c5-.6 9.4-2.2 13.2-4.6z" fill="#7f876d" stroke="#000" stroke-width="1.5" stroke-linejoin="round"/></svg>
<svg class="b" style="left:498.6px;top:83.5px;" width="42" height="42" viewBox="0 0 42 42"><path d="M40.8 14L26 .8l-.6 7.6C15.400000000000002 7.4 5.8 10.4 2 18.200000000000003l.4 7.6C9 22 18 22.6 25.6 25.8l.2-.2z" fill="#bdbdbd" stroke="#a2a2a2" stroke-width="1.3" stroke-linejoin="round"/><path d="M2.4 25.6c2.6 8.6 9 13 19.6 15l-5-6.8 5.4-5.6c-5-.6-9.4-2.2-13.2-4.6z" fill="#c8c8c8" stroke="#a2a2a2" stroke-width="1.3" stroke-linejoin="round"/></svg>
<svg class="b" style="left:564.3px;top:83.5px;" width="42" height="42" viewBox="0 0 42 42"><path d="M17 11.5L23 1l18 4.6-5.4 11.2z" fill="#fff" stroke="#000" stroke-width="1.4"/><path d="M1 18.4L18 7.6l23.4 7.2L27 27.6z" fill="#4a4548" stroke="#000" stroke-width="1.4" stroke-linejoin="round"/><path d="M1 18.4l26 9.2-.6 12.4L2 29.6z" fill="#2a2628" stroke="#000" stroke-width="1.4" stroke-linejoin="round"/><path d="M27 27.6l14.4-12.8-1 10L26.4 40z" fill="#6a6668" stroke="#000" stroke-width="1.4" stroke-linejoin="round"/><path d="M5.6 26.6L2 34.4l14.6 6.4 5-7.6z" fill="#fff" stroke="#000" stroke-width="1.5" stroke-linejoin="round"/><path d="M13.5 15.4l5 1.6-1.6 1.8-5-1.6z" fill="#1f8fe8"/></svg>
<svg class="b" style="left:630.0px;top:83.5px;" width="42" height="42" viewBox="0 0 42 42"><g transform="translate(0.6,1.6) scale(0.98)"><path d="M1.1 4.7L23.5 1.6l14.2 8.7-1.3 17L10.9 39.9z" fill="#fb000d" stroke="#1a0000" stroke-width="1.7" stroke-linejoin="round"/><path d="M20.1 5.6l9.3 5.8 7.2-.5-.4 13.1-10.2-5z" fill="#d80012"/><path d="M3.1 6l17.4-2.4 15.6 6.7-6.7 1.1-9.3-5.8L3.5 7.5z" fill="#dde6e6"/><path d="M6.1 16.6l14-3 4.4 2.6-6.6.6-10.3 2.6z" fill="#dde6e6"/><path d="M9.4 27.7l7.6-1.4v4l-5.7 1.5z" fill="#dde6e6"/></g><circle cx="29.6" cy="28.6" r="11.6" fill="#1d4e9a" stroke="#000" stroke-width="1.6"/><circle cx="29.6" cy="21.6" r="2.3" fill="#fff"/><rect x="27.4" y="25.4" width="4.4" height="11" fill="#fff"/></svg>
<svg class="b" style="left:698.0px;top:84.0px;" width="44" height="44" viewBox="0 0 44 44"><g fill="none" stroke="#000" stroke-width="2.5"><path d="M3.4 20L11.6 3.6 19.8 20M6.4 15.4h10.6"/><path d="M24 20V4.6h8c5.4 0 5.4 7.8 0 7.8h-8M32.4 12.6l6.4 7.4"/><path d="M3.6 24.4h14M10.6 24.4v16"/><path d="M23 24.4l15.4 15.8M38.4 24.4L23 40.2"/></g></svg>
<svg class="b" style="left:772.0px;top:83.5px;" width="42" height="42" viewBox="0 0 42 42"><path d="M6 16l30 12 6 7-22 6z" fill="#1a1a1a"/><path d="M1.5 10.5L22.500000000000004 1l14 13.4-19 9.8z" fill="#fff" stroke="#000" stroke-width="1.7" stroke-linejoin="round"/><path d="M1.5 10.5l16 13.7 4.6 14.6L8 27z" fill="#1a1a1a" stroke="#000" stroke-width="1.5" stroke-linejoin="round"/><path d="M17.5 24.2l19-9.8 1.6 12-16 12.4z" fill="#2a2a2a" stroke="#000" stroke-width="1.5" stroke-linejoin="round"/></svg>
<div class="b" style="left:831.0px;top:87.5px;width:323.5px;height:7.5px;background:linear-gradient(90deg,#ffffff 0%,#fbe9a8 12%,#f6c21a 33%,#f59a08 48%,#f43c0c 60%,#f01414 68%,#f8707a 82%,#ffffff 100%);border-top:1.5px solid #7a7a7a;border-left:1.5px solid #9a9a9a;"></div>
<div class="b" style="left:1031.0px;top:85.0px;width:8.8px;height:13.6px;background:#f2f2f2;border:1px solid #a8a8a8;"></div>
<span class="t" style="left:839.77px;top:98.4px;font-size:16.5px;color:#000;">J</span>
<span class="t" style="left:865.54px;top:98.4px;font-size:16.5px;color:#000;">F</span>
<span class="t" style="left:893.15px;top:98.4px;font-size:16.5px;color:#000;">M</span>
<span class="t" style="left:920.11px;top:98.4px;font-size:16.5px;color:#000;">A</span>
<span class="t" style="left:947.15px;top:98.4px;font-size:16.5px;color:#000;">M</span>
<span class="t" style="left:974.37px;top:98.4px;font-size:16.5px;color:#000;">J</span>
<span class="t" style="left:1001.97px;top:98.4px;font-size:16.5px;color:#000;">J</span>
<span class="t" style="left:1028.01px;top:98.4px;font-size:16.5px;color:#000;">A</span>
<span class="t" style="left:1055.21px;top:98.4px;font-size:16.5px;color:#000;">S</span>
<span class="t" style="left:1082.21px;top:98.4px;font-size:16.5px;color:#000;">O</span>
<span class="t" style="left:1109.06px;top:98.4px;font-size:16.5px;color:#000;">N</span>
<span class="t" style="left:1136.17px;top:98.4px;font-size:16.5px;color:#000;">D</span>
<span class="t" style="left:1178.27px;top:98.4px;font-size:16.5px;color:#000;transform:scaleX(1.1013);">05:19 AM</span>
<div class="b" style="left:1179.0px;top:87.5px;width:322.0px;height:7.5px;background:linear-gradient(90deg,#ffffff 0%,#c9dcec 18%,#8fb4dc 40%,#7a8cf0 60%,#5a5ae0 72%,#26246a 86%,#05050c 100%);border-top:1.5px solid #7a7a7a;border-left:1.5px solid #9a9a9a;"></div>
<div class="b" style="left:1389.0px;top:85.0px;width:8.8px;height:13.6px;background:#f2f2f2;border:1px solid #a8a8a8;"></div>
<span class="t" style="left:1317.92px;top:98.4px;font-size:16.5px;color:#000;transform:scaleX(1.1230);">Noon</span>
<span class="t" style="left:1425.27px;top:98.4px;font-size:16.5px;color:#000;transform:scaleX(1.1086);">06:49 PM</span>
<svg class="b" style="left:1536.0px;top:83.5px;" width="42" height="42" viewBox="0 0 42 42"><path d="M3 2.5l11 1.6 12-2.2 11 2V39l-11-2.6-12 1.8-11-2z" fill="#5a9a2e" stroke="#000" stroke-width="1.3" stroke-linejoin="round"/><path d="M14 4.1l12-2.2V36.4l-12 1.8z" fill="#7ab04a"/><path d="M3 26l34-14v6L3 32z" fill="#e8dc6a"/><path d="M3 32l34-14v21l-11-2.6-12 1.8-11-2z" fill="#4a78c8"/><path d="M26 1.9l11 2V20l-11 6z" fill="#e8e0d0"/><ellipse cx="10" cy="15" rx="5.4" ry="7.6" fill="#8cc04e" stroke="#fff" stroke-width="1.6"/><path d="M11 22c2 6 1.4 10 6 15" stroke="#fff" stroke-width="2.6" fill="none"/><path d="M17 9c2 5 2 10 1 16" stroke="#a0a0a0" stroke-width="3" fill="none"/><path d="M3 2.5l11 1.6 12-2.2 11 2V39l-11-2.6-12 1.8-11-2z" fill="none" stroke="#000" stroke-width="1.3" stroke-linejoin="round"/><path d="M25 6h10.4v13.6h5.6L30.2 31.5 19.4 19.6H25z" fill="#1f8fe8" stroke="#000" stroke-width="1.3" stroke-linejoin="round"/></svg>
<svg class="b" style="left:1593.0px;top:83.5px;" width="42" height="42" viewBox="0 0 42 42"><path d="M12 32.5l27.4-10 .6 3.6L14.6 40z" fill="#d0d0d0" stroke="#b4b4b4" stroke-width="1"/><path d="M1.5 9.6c8-3.6 14 1.4 22-3 6 6.6 10 7.6 16.4 15.600000000000001C30 25.6 24 33 14.6 38.8z" fill="#dcdcdc" stroke="#b0b0b0" stroke-width="1.2" stroke-linejoin="round"/></svg>
<svg class="b" style="left:1649.0px;top:81.5px;" width="46" height="46" viewBox="0 0 46 46"><ellipse cx="14" cy="34" rx="12.6" ry="5" fill="#dadada" stroke="#bdbdbd"/><path d="M18 33l10 7-3-9z" fill="#dadada" stroke="#bdbdbd"/><circle cx="10.6" cy="5.8" r="5.2" fill="#b9b9b9"/><path d="M5.4 12.5h11l-1.4 21H7.6z" fill="#c6c6c6" stroke="#b0b0b0"/><path d="M29 8h9.4v12.4h5L33.6 31 23.8 20.4H29z" fill="#b9b9b9" stroke="#a8a8a8"/></svg>
<svg class="b" style="left:479.0px;top:145.3px;" width="42" height="42" viewBox="0 0 42 42"><path d="M2.8 11L25.2 2l14.2 17.4-4.100000000000001 11.4L16.700000000000003 41z" fill="#8fb4cf" stroke="#000" stroke-width="2"/></svg>
<svg class="b" style="left:538.0px;top:145.3px;" width="42" height="42" viewBox="0 0 42 42"><path d="M2.8 11L25.2 2l14.2 17.4-4.100000000000001 11.4L16.700000000000003 41z" fill="#fff" stroke="#000" stroke-width="1.6"/><path d="M25.2 2l2 18" stroke="#999" stroke-width="1"/></svg>
<svg class="b" style="left:603.0px;top:145.3px;" width="42" height="42" viewBox="0 0 42 42"><g fill="none" stroke="#000" stroke-width="1.5" stroke-linejoin="round"><path d="M2.8 11L25.2 2l14.2 17.4-4.1 11.4L16.7 41z"/><path d="M2.8 11l11.8 20.500000000000004L16.7 41M14.6 31.5L39.4 19.4M25.2 2l-1.6 17.4L6 26.6M23.6 19.4L35.3 30.8"/></g></svg>
<svg class="b" style="left:661.5px;top:145.3px;" width="42" height="42" viewBox="0 0 42 42"><path d="M2.8 11L25.2 2l14.2 17.4-4.1 11.4L16.7 41z" fill="#fdfdfd" stroke="#000" stroke-width="2.6" stroke-linejoin="round"/><path d="M2.8 11l11.8 20.5L16.7 41M14.6 31.5L39.4 19.4" fill="none" stroke="#000" stroke-width="0.9"/></svg>
<svg class="b" style="left:719.0px;top:145.3px;" width="42" height="42" viewBox="0 0 42 42"><polygon points="2.8,11.0 25.2,2.0 39.4,19.4 14.6,31.5" fill="#a8a592"/><polygon points="14.6,31.5 39.4,19.4 35.3,30.8 16.7,41.0" fill="#8c8a79"/><polygon points="2.8,11.0 14.6,31.5 16.7,41.0" fill="#3a392f"/><path d="M2.8 11L25.2 2l14.2 17.4-4.1 11.4L16.7 41z" fill="none" stroke="#000" stroke-width="1.5" stroke-linejoin="round"/></svg>
<div class="b" style="left:770.0px;top:138.0px;width:58.0px;height:57.0px;background:#c9e0f7;border:1.2px solid #9bcaf0;"></div>
<svg class="b" style="left:778.0px;top:145.3px;" width="42" height="42" viewBox="0 0 42 42"><clipPath id="cb1"><path d="M2.8 11L25.2 2l14.2 17.4-4.1 11.4L16.7 41z"/></clipPath><g clip-path="url(#cb1)"><rect width="42" height="42" fill="#a8a592"/><path d="M0 12L26 1l4 4.6L5 17zM7 22l25-11 4.6 5.400000000000002L11 28z" fill="#000"/><path d="M12 30.5l30-13v2.600000000000001L13.5 33.5zM14.5 36l26-11.5v2L15.5 38.5z" fill="#000"/><path d="M2.8 11l11.8 20.5L16.7 41H0z" fill="#000"/></g><path d="M2.8 11L25.2 2l14.2 17.4-4.1 11.4L16.7 41z" fill="none" stroke="#000" stroke-width="1.5" stroke-linejoin="round"/></svg>
<svg class="b" style="left:835.5px;top:145.3px;" width="42" height="42" viewBox="0 0 42 42"><path d="M2.8 11L25.2 2l14.2 17.4-4.1 11.4L16.7 41z" fill="#1f8fe8"/><path d="M2.8 11l36.599999999999994 8.399999999999999L14.6 31.5z" fill="#a8a592"/><path d="M14.6 31.5L39.4 19.4 16.7 41z" fill="#8c8a79"/><path d="M2.8 11l11.8 20.5L16.7 41z" fill="#0d5aa0"/><path d="M2.8 11L25.2 2l14.2 17.4-4.1 11.4L16.7 41z" fill="none" stroke="#000" stroke-width="1.5" stroke-linejoin="round"/></svg>
<svg class="b" style="left:906.0px;top:145.3px;" width="42" height="42" viewBox="0 0 42 42"><path d="M6.5 18.5l2.2 15.2L21.6 40l1-15.5z" fill="#fff" stroke="#000" stroke-width="1.3"/><path d="M21.6 40l15.2-9 1.4-14-15.6 7.5z" fill="#f4f4f4" stroke="#000" stroke-width="1.3"/><path d="M10.2 5.5l18-3.4L41.2 14.6 22.6 25.4z" fill="#8c8a79" stroke="#000" stroke-width="1.3"/><path d="M1.2 18L10.2 5.5l12.4 19.9" fill="none" stroke="#000" stroke-width="3.2" stroke-linejoin="round"/><path d="M22.6 25.4L41.2 14.6" stroke="#000" stroke-width="2.6"/><path d="M27.4 2.6l6-1.4v9.6l-6-3.2z" fill="#fff" stroke="#000" stroke-width="1.3"/><path d="M10.6 22.6l3.6 1.6v9.6l-3.600000000000001-1.6z" fill="#000"/></svg>
<svg class="b" style="left:964.0px;top:145.3px;" width="42" height="42" viewBox="0 0 42 42"><path d="M4 6l17-3.4 17 3.4V35.6L21 39.2 4 35.6z" fill="#a8a592" stroke="#000" stroke-width="1.6" stroke-linejoin="round"/><path d="M21 2.6v36.6" stroke="#000" stroke-width="1.4"/><rect x="27.6" y="7.2" width="5.6" height="11" fill="#fff" stroke="#000" stroke-width="1.6"/></svg>
<svg class="b" style="left:1022.0px;top:145.3px;" width="42" height="42" viewBox="0 0 42 42"><rect x="24.6" y="7.4" width="3" height="6" fill="#bbb" stroke="#000" stroke-width="0.8"/><path d="M7 20v18h28V20L21 9.2z" fill="#fff"/><path d="M7 21v17.2h28V21" fill="none" stroke="#000" stroke-width="3"/><path d="M2.2 22L21 7.4 39.8 22" fill="none" stroke="#000" stroke-width="4.2" stroke-linejoin="miter"/><rect x="16.4" y="22.8" width="8" height="15" fill="#2e2e2e" stroke="#000" stroke-width="1.2"/></svg>
<svg class="b" style="left:1080.0px;top:145.3px;" width="42" height="42" viewBox="0 0 42 42"><rect x="23.2" y="1.4" width="10.4" height="11.6" fill="#fff" stroke="#000" stroke-width="1.6"/><path d="M5.4 7.200000000000001h31.2l4 12.6H1.4z" fill="#8c8a79" stroke="#000" stroke-width="1.6" stroke-linejoin="round"/><rect x="23.2" y="1.4" width="10.4" height="8" fill="#fff"/><path d="M23.2 9.4v-8h10.4v8" fill="none" stroke="#000" stroke-width="1.6"/><path d="M1 20.6h40" stroke="#000" stroke-width="3"/><rect x="5.6" y="21.6" width="30.8" height="16" fill="#fcfcfc" stroke="#000" stroke-width="2.2"/></svg>
<svg class="b" style="left:1138.0px;top:145.3px;" width="42" height="42" viewBox="0 0 42 42"><rect x="12" y="5" width="4" height="9" fill="#ddd" stroke="#000" stroke-width="1"/><path d="M7 20v18h28V20L21 9.2z" fill="#fcfcfc"/><path d="M7 21v17.2h28V21" fill="none" stroke="#000" stroke-width="3"/><path d="M2.2 22L21 7.4 39.8 22" fill="none" stroke="#000" stroke-width="4.2"/></svg>
<svg class="b" style="left:1196.0px;top:145.3px;" width="42" height="42" viewBox="0 0 42 42"><rect x="11.6" y="5.6" width="7" height="2.6" fill="#ddd" stroke="#000" stroke-width="1"/><path d="M5.4 7.6h31.2l4 12.2H1.4z" fill="#8c8a79" stroke="#000" stroke-width="1.6" stroke-linejoin="round"/><path d="M1 20.6h40" stroke="#000" stroke-width="3"/><rect x="5.6" y="21.6" width="30.8" height="16" fill="#fcfcfc" stroke="#000" stroke-width="2.2"/></svg>
<svg class="b" style="left:1266.0px;top:145.3px;" width="42" height="42" viewBox="0 0 42 42"><polygon points="1.6,8.5 21.2,5.1 29.6,19.4 6.4,23.7" fill="#8c8a79" stroke="#000" stroke-width="1.3" stroke-linejoin="round"/><polygon points="1.6,8.5 6.4,23.7 6.6,30.1 1.8,14.9" fill="#4f4d42" stroke="#000" stroke-width="1.3" stroke-linejoin="round"/><polygon points="6.4,23.7 29.6,19.4 29.8,25.8 6.6,30.1" fill="#6f6d5e" stroke="#000" stroke-width="1.3" stroke-linejoin="round"/><polygon points="13.8,12.7 32.4,8.8 40.7,24.5 18.5,29.3" fill="#8c8a79" stroke="#000" stroke-width="1.3" stroke-linejoin="round"/><polygon points="13.8,12.7 18.5,29.3 18.7,35.7 14.0,19.1" fill="#4f4d42" stroke="#000" stroke-width="1.3" stroke-linejoin="round"/><polygon points="18.5,29.3 40.7,24.5 40.9,30.9 18.7,35.7" fill="#6f6d5e" stroke="#000" stroke-width="1.3" stroke-linejoin="round"/><path d="M14.6 14.4l8.6-1.8 3.4 11" fill="none" stroke="#000" stroke-width="1"/></svg>
<svg class="b" style="left:1332.0px;top:145.3px;" width="42" height="42" viewBox="0 0 42 42"><g fill="none" stroke="#000" stroke-width="1.1"><polygon points="1.6,8.5 21.2,5.1 29.6,19.4 6.4,23.7"/><polygon points="1.8,14.9 21.4,11.5 29.8,25.8 6.6,30.1"/><path d="M1.6 8.5L1.8 14.9"/><path d="M21.2 5.1L21.4 11.5"/><path d="M29.6 19.4L29.8 25.8"/><path d="M6.4 23.7L6.6 30.1"/></g><g fill="none" stroke="#000" stroke-width="1.1"><polygon points="13.8,12.7 32.4,8.8 40.7,24.5 18.5,29.3"/><polygon points="14.0,19.1 32.6,15.2 40.9,30.9 18.7,35.7"/><path d="M13.8 12.7L14.0 19.1"/><path d="M32.4 8.8L32.6 15.2"/><path d="M40.7 24.5L40.9 30.9"/><path d="M18.5 29.3L18.7 35.7"/></g><polygon points="13.6,13.4 22.2,11.6 28.6,20.3 16.4,23.0" fill="#8c8a79" stroke="#000" stroke-width="1.3" stroke-linejoin="round"/><polygon points="13.6,13.4 16.4,23.0 16.6,30.0 13.8,20.4" fill="#4f4d42" stroke="#000" stroke-width="1.3" stroke-linejoin="round"/><polygon points="16.4,23.0 28.6,20.3 28.8,27.3 16.6,30.0" fill="#6f6d5e" stroke="#000" stroke-width="1.3" stroke-linejoin="round"/></svg>
<svg class="b" style="left:1389.0px;top:145.3px;" width="42" height="42" viewBox="0 0 42 42"><polygon points="1.6,8.5 21.2,5.1 29.6,19.4 6.4,23.7" fill="#8c8a79" stroke="#000" stroke-width="1.3" stroke-linejoin="round"/><polygon points="1.6,8.5 6.4,23.7 6.6,30.1 1.8,14.9" fill="#4f4d42" stroke="#000" stroke-width="1.3" stroke-linejoin="round"/><polygon points="6.4,23.7 29.6,19.4 29.8,25.8 6.6,30.1" fill="#6f6d5e" stroke="#000" stroke-width="1.3" stroke-linejoin="round"/><polygon points="13.8,12.7 32.4,8.8 40.7,24.5 18.5,29.3" fill="#8c8a79" stroke="#000" stroke-width="1.3" stroke-linejoin="round"/><polygon points="13.8,12.7 18.5,29.3 18.7,35.7 14.0,19.1" fill="#4f4d42" stroke="#000" stroke-width="1.3" stroke-linejoin="round"/><polygon points="18.5,29.3 40.7,24.5 40.9,30.9 18.7,35.7" fill="#6f6d5e" stroke="#000" stroke-width="1.3" stroke-linejoin="round"/><path d="M20 16.5l9-1.9 2.6 8.6-9 2.2z" fill="#55534a" stroke="#000" stroke-width="1.1"/><path d="M23 17.6l3.4-.7 1.2 3.6-3.4.9z" fill="#8c8a79" stroke="#000" stroke-width=".8"/><path d="M20 16.5l3 1.1M29 14.6l-2.6 2.3M31.6 23.2l-4-2.7M22.6 25.4l1.6-4" stroke="#000" stroke-width=".8"/></svg>
<svg class="b" style="left:1447.5px;top:145.3px;" width="42" height="42" viewBox="0 0 42 42"><polygon points="1.6,8.5 21.2,5.1 29.6,19.4 6.4,23.7" fill="#8c8a79" stroke="#000" stroke-width="1.3" stroke-linejoin="round"/><polygon points="1.6,8.5 6.4,23.7 6.6,30.1 1.8,14.9" fill="#4f4d42" stroke="#000" stroke-width="1.3" stroke-linejoin="round"/><polygon points="6.4,23.7 29.6,19.4 29.8,25.8 6.6,30.1" fill="#6f6d5e" stroke="#000" stroke-width="1.3" stroke-linejoin="round"/><path d="M13.6 13.4l8.6-1.8 2.6 8-8.6 2.4z" fill="#4a483e" stroke="#000"/><g fill="none" stroke="#000" stroke-width="1.1"><polygon points="13.8,12.7 32.4,8.8 40.7,24.5 18.5,29.3"/><polygon points="14.0,19.1 32.6,15.2 40.9,30.9 18.7,35.7"/><path d="M13.8 12.7L14.0 19.1"/><path d="M32.4 8.8L32.6 15.2"/><path d="M40.7 24.5L40.9 30.9"/><path d="M18.5 29.3L18.7 35.7"/></g></svg>
<svg class="b" style="left:1506.0px;top:145.3px;" width="42" height="42" viewBox="0 0 42 42"><polygon points="1.6,8.5 21.2,5.1 29.6,19.4 6.4,23.7" fill="#1f8fe8" stroke="#000" stroke-width="1.3" stroke-linejoin="round"/><polygon points="1.6,8.5 6.4,23.7 6.6,30.1 1.8,14.9" fill="#0a4c8c" stroke="#000" stroke-width="1.3" stroke-linejoin="round"/><polygon points="6.4,23.7 29.6,19.4 29.8,25.8 6.6,30.1" fill="#0d68b8" stroke="#000" stroke-width="1.3" stroke-linejoin="round"/><polygon points="13.8,12.7 32.4,8.8 40.7,24.5 18.5,29.3" fill="#8c8a79" stroke="#000" stroke-width="1.3" stroke-linejoin="round"/><polygon points="13.8,12.7 18.5,29.3 18.7,35.7 14.0,19.1" fill="#4f4d42" stroke="#000" stroke-width="1.3" stroke-linejoin="round"/><polygon points="18.5,29.3 40.7,24.5 40.9,30.9 18.7,35.7" fill="#6f6d5e" stroke="#000" stroke-width="1.3" stroke-linejoin="round"/><path d="M14 12.2l8.6-1.8 1.6 5" fill="none" stroke="#000" stroke-width="1.1"/><path d="M14.4 12.4l8-1.6 1.4 4.6-5.6 1.4z" fill="#4a483e"/></svg>
<svg class="b" style="left:1564.0px;top:145.3px;" width="42" height="42" viewBox="0 0 42 42"><polygon points="1.6,8.5 21.2,5.1 29.6,19.4 6.4,23.7" fill="#1f8fe8" stroke="#000" stroke-width="1.3" stroke-linejoin="round"/><polygon points="1.6,8.5 6.4,23.7 6.6,30.1 1.8,14.9" fill="#0a4c8c" stroke="#000" stroke-width="1.3" stroke-linejoin="round"/><polygon points="6.4,23.7 29.6,19.4 29.8,25.8 6.6,30.1" fill="#0d68b8" stroke="#000" stroke-width="1.3" stroke-linejoin="round"/><polygon points="13.8,12.7 32.4,8.8 40.7,24.5 18.5,29.3" fill="#8c8a79" stroke="#000" stroke-width="1.3" stroke-linejoin="round"/><polygon points="13.8,12.7 18.5,29.3 18.7,35.7 14.0,19.1" fill="#4f4d42" stroke="#000" stroke-width="1.3" stroke-linejoin="round"/><polygon points="18.5,29.3 40.7,24.5 40.9,30.9 18.7,35.7" fill="#6f6d5e" stroke="#000" stroke-width="1.3" stroke-linejoin="round"/><path d="M16 13.6l8.6-1.9 2.6 8.4-8.4 2.1z" fill="#cfcfcf" stroke="#000" stroke-width="1.1"/></svg>
<svg class="b" style="left:1523.0px;top:207.3px;" width="42" height="42" viewBox="0 0 42 42"><circle cx="20" cy="21" r="13" fill="#fff" stroke="#000" stroke-width="1.5"/><path d="M1.6 21h36" stroke="#000" stroke-width="2.8"/><path d="M21 3l18.4 18L21 39v-5.4L32.4 21 21 8.4z" fill="#000"/><rect x="9" y="19.6" width="22" height="2.8" fill="#000"/><text x="19.6" y="17.6" font-family="Liberation Serif,serif" font-size="9.5" text-anchor="middle" fill="#000">C</text><text x="19.6" y="31" font-family="Liberation Serif,serif" font-size="8" text-anchor="middle" fill="#000">A-5</text></svg>
<svg class="b" style="left:1583.0px;top:207.3px;" width="42" height="42" viewBox="0 0 42 42"><path d="M5.2 16.5L15.6 6l10 13.8V34.4L5.2 29z" fill="#3f86c2" stroke="#1d5f95" stroke-width="1.4" stroke-linejoin="round"/><path d="M25.6 19.8l11.4-5v11.6l-11.4 8z" fill="#5c9bd0" stroke="#1d5f95" stroke-width="1.4" stroke-linejoin="round"/><path d="M15.6 6l13.6-2.2 11 11-14.6 5z" fill="#4c8fc8" stroke="#1d5f95" stroke-width="1.4" stroke-linejoin="round"/><path d="M26.4 2.4l5.6-1v9.8l-5.6-2z" fill="#7ab0da" stroke="#1d5f95" stroke-width="1.2"/><path d="M1.6 1.2l31 2.4-.6 37.2L3.4 28.4z" fill="#4e9ade" fill-opacity=".62" stroke="#ef1a2a" stroke-width="1.6" stroke-linejoin="round"/><path d="M9.4 20l8.4-4.4 8.2 2.4M17.8 15.6V27.2" fill="none" stroke="#1d5f95" stroke-width="1.2"/></svg>
<div class="b" style="left:1632.0px;top:200.0px;width:58.0px;height:57.0px;background:#c9e0f7;border:1.2px solid #9bcaf0;"></div>
<svg class="b" style="left:1640.0px;top:207.3px;" width="42" height="42" viewBox="0 0 42 42"><path d="M5.2 16.5L15.6 6l10 13.8V34.4L5.2 29z" fill="#8e8e8e" stroke="#000" stroke-width="1.4" stroke-linejoin="round"/><path d="M25.6 19.8l11.4-5v11.6l-11.4 8z" fill="#fafafa" stroke="#000" stroke-width="1.4" stroke-linejoin="round"/><path d="M15.6 6l13.6-2.2 11 11-14.6 5z" fill="#8c8a79" stroke="#000" stroke-width="1.4" stroke-linejoin="round"/><path d="M26.4 2.4l5.6-1v9.8l-5.6-2z" fill="#e6e6e6" stroke="#000" stroke-width="1.2"/><path d="M9.8 19l5.8-6 5.6 7.600000000000001v9.6L9.8 27.2z" fill="#b9b9b9"/><path d="M9.8 24l11.4 2.8v3.4L9.8 27.2z" fill="#6e6e6e"/><path d="M5.2 16.5L15.6 6l10 13.8V34.4L5.2 29z" fill="none" stroke="#1f8fe8" stroke-width="3" stroke-linejoin="miter"/></svg>
<svg class="b" style="left:1699.0px;top:207.3px;" width="42" height="42" viewBox="0 0 42 42"><path d="M5.2 16.5L15.6 6l10 13.8V34.4L5.2 29z" fill="#1592d6" stroke="#000" stroke-width="1.4" stroke-linejoin="round"/><path d="M25.6 19.8l11.4-5v11.6l-11.4 8z" fill="#fafafa" stroke="#000" stroke-width="1.4" stroke-linejoin="round"/><path d="M15.6 6l13.6-2.2 11 11-14.6 5z" fill="#8c8a79" stroke="#000" stroke-width="1.4" stroke-linejoin="round"/><path d="M26.4 2.4l5.6-1v9.8l-5.6-2z" fill="#e6e6e6" stroke="#000" stroke-width="1.2"/></svg>
<div class="b" style="left:118.0px;top:117.0px;width:296.5px;height:105.5px;background:#f0f0f0;border:1.5px solid #99b4d1;box-shadow:1.5px 1.5px 0 0 #6a6a6a;"></div>
<div class="b" style="left:118.0px;top:117.0px;width:296.5px;height:43.5px;background:#99b4d1;"></div>
<span class="t" style="left:120.24px;top:132.0px;font-size:19.6px;color:#000;font-weight:bold;transform:scaleX(0.9863);">FredoCorner</span>
<div class="b" style="left:397.0px;top:131.0px;width:12.2px;height:13.2px;background:#c9525c;"></div>
<svg class="b" style="left:397.0px;top:131.0px;" width="12.2" height="13.2" viewBox="0 0 12.2 13.2"><path d="M3.4 4l5.2 5.2M8.6 4L3.4 9.200000000000001" stroke="#fff" stroke-width="1.8" fill="none"/></svg>
<svg class="b" style="left:124.0px;top:164.0px;" width="40" height="56" viewBox="0 0 40 56"><path d="M2 52V24C2 10 12 4 26 2l14 0V52z" fill="#f0a22c"/><path d="M10 12c6-6 14-9 30-9v16c-12 0-20 1-26 5z" fill="#e8b818"/><path d="M2 52V24C2 10 12 4 26 2" fill="none" stroke="#000" stroke-width="0"/><path d="M16 1l10 7 14-6M9 28v24" fill="none" stroke="#000" stroke-width="2.4"/><path d="M2 28c8-4 18-6 38-6M14 8c-3 8-3 20-2 44" fill="none" stroke="#fff" stroke-width="1.6"/></svg>
<div class="b" style="left:157.0px;top:157.5px;width:421.5px;height:104.0px;background:#f2f2f2;border:1.5px solid #a9c0dc;box-shadow:1.5px 1.5px 0 0 #6a6a6a;"></div>
<div class="b" style="left:158.0px;top:158.5px;width:419.5px;height:41.5px;background:#99b4d1;"></div>
<div class="b" style="left:157.0px;top:157.5px;width:421.5px;height:1.5px;background:#eef3f9;"></div>
<span class="t" style="left:160.62px;top:172.0px;font-size:19.6px;color:#000;font-weight:bold;transform:scaleX(0.9814);">Sandbox</span>
<div class="b" style="left:561.0px;top:171.0px;width:12.2px;height:13.2px;background:#c9525c;"></div>
<svg class="b" style="left:561.0px;top:171.0px;" width="12.2" height="13.2" viewBox="0 0 12.2 13.2"><path d="M3.4 4l5.2 5.2M8.6 4L3.4 9.2" stroke="#fff" stroke-width="1.8" fill="none"/></svg>
<div class="b" style="left:280.0px;top:204.0px;width:1.0px;height:53.0px;background:#9a9a9a;"></div>
<svg class="b" style="left:169.5px;top:208.0px;" width="42" height="42" viewBox="0 0 42 42"><defs><linearGradient id="sg1" x1="0" y1="1" x2="1" y2="0"><stop offset="0" stop-color="#5c5c5c"/><stop offset=".45" stop-color="#e8e8e8"/><stop offset=".75" stop-color="#a8a8a8"/><stop offset="1" stop-color="#e4e4e4"/></linearGradient><clipPath id="sc1"><path d="M1.6 10.5C7 6 12 1.2 18 1.4c5 .2 6 2.6 12 4.2 3 6 6 14 12.4 19.6C36 31 26 33 9 38.4z"/></clipPath></defs><path d="M1.6 10.5C7 6 12 1.2 18 1.4c5 .2 6 2.6 12 4.2 3 6 6 14 12.4 19.6C36 31 26 33 9 38.4z" fill="url(#sg1)" stroke="#000" stroke-width="1.5" stroke-linejoin="round"/><g clip-path="url(#sc1)" fill="none" stroke="#f03c10" stroke-width="1.7"><ellipse cx="22.6" cy="29" rx="3.4" ry="4.2" transform="rotate(20 22.6 29)"/><ellipse cx="22.6" cy="29" rx="7.6" ry="8.6" transform="rotate(20 22.6 29)"/><path d="M12 40c-3-10 2-20 10-24s10-8 9-14M6 30c0-8 4-14 10-17s8-6 7.6-12M3 20c1-6 5-9 9-11s6-5 5.6-8M33 38c0-6 3-10 8-13M12 1c2 3 8 5 14 2"/></g></svg>
<svg class="b" style="left:225.0px;top:209.6px;" width="44" height="44" viewBox="0 0 44 44"><path d="M4.6 9.2L31.4 3l11 24.6-33.4 9z" fill="#8c8a79" stroke="#000" stroke-width="1.3" stroke-linejoin="round"/><path d="M13.4 7.2l8.8 26M22.4 5.2l10 25M6 18l29.6-7.6M7.6 27l31.6-8.4" stroke="#000" stroke-width="1.1"/><path d="M4.6 9.2L31.4 3M4.6 9.2L9 36.6" stroke="#ee1c24" stroke-width="2.4"/><circle cx="4.6" cy="9.2" r="3.4" fill="#ee1c24"/><circle cx="31.4" cy="3.6" r="3.4" fill="#ee1c24"/><circle cx="9" cy="37" r="3.4" fill="#ee1c24"/><circle cx="41.6" cy="27.4" r="1.6" fill="#000"/></svg>
<svg class="b" style="left:291.0px;top:207.0px;" width="44" height="44" viewBox="0 0 44 44"><path d="M1.6 23L14 7.6C20 14 24 14 30 8.6l13 13.6L26 40.4z" fill="#a8a592" stroke="#000" stroke-width="1.3" stroke-linejoin="round"/><g fill="none" stroke="#000" stroke-width=".9"><path d="M6 25c6-4 8-10 12-13M11 29c6-6 10-6 14-14M17 33c4-6 10-8 14-16M22 37c4-4 10-8 14-14M6 18c8 4 18 8 26 18M10 13c8 6 18 8 28 16M4 21l24 17"/></g><path d="M21 1.6l7 9.6h-3.6v8h3.6l-7 10.4-7-10.4h3.600000000000001v-8H14z" fill="#ee1c24" stroke="#000" stroke-width="1.3" stroke-linejoin="round"/></svg>
<svg class="b" style="left:349.5px;top:207.0px;" width="44" height="44" viewBox="0 0 44 44"><path d="M1.6 27.6L18 6l25 23-19 12.4z" fill="#8c8a79" stroke="#000" stroke-width="1.3" stroke-linejoin="round"/><path d="M8 27l10-12 16 13-10 7z" fill="#a8a592" stroke="#000" stroke-width="1.1"/><path d="M12 27.4l7-6 10 6.2-6 5z" fill="#55534a" stroke="#000" stroke-width="1"/><path d="M15 13.6l6.600000000000001-9L29 12v9l-6 4-8-3.6z" fill="#f4f4f4" stroke="#000" stroke-width="1.3" stroke-linejoin="round"/><path d="M15 13.6l8 3.4 6-5M23 17v8" fill="none" stroke="#000" stroke-width="1"/><rect x="24.6" y="15.6" width="2.6" height="5" fill="#444" transform="skewY(-20) translate(0,9)"/></svg>
<svg class="b" style="left:407.7px;top:207.0px;" width="44" height="44" viewBox="0 0 44 44"><path d="M3 25c4-2 6-2 9-7 2 8 16 8 19 0 2 6 6 10 10 13-8 3-20 7-33 10.6C7 35 5 31 3 25z" fill="#dcdcd4" stroke="#000" stroke-width="1.3" stroke-linejoin="round"/><ellipse cx="21.6" cy="9" rx="10" ry="6.6" fill="#f4f4f4" stroke="#000" stroke-width="1.4"/><path d="M14 10.5c4-2 10-2 15 0" stroke="#000" stroke-width="1.2" fill="none"/><path d="M12.6 13c1 8 1 12 4 18 3 4 9 2 10-3 1-5 3-9 4.6-15" fill="#e8e8e0" stroke="#000" stroke-width="1.2"/></svg>
<svg class="b" style="left:465.8px;top:207.0px;" width="44" height="44" viewBox="0 0 44 44"><path d="M1.6 11.6L30 3l12.4 24.6-31 10.6z" fill="#66645a" stroke="#000" stroke-width="1.4" stroke-linejoin="round"/><g stroke="#000" stroke-width=".9" fill="none"><path d="M1.6 11.6l20 10L30 3M21.6 21.6l20.8 6M21.6 21.6l-10.2 16.6M21.6 21.6L36 15M21.6 21.6l8.4 10M21.6 21.6L6 25"/></g><path d="M24 22l18.4 5.6-12 4z" fill="#1a1a18"/><circle cx="21.6" cy="21.6" r="4" fill="#fff"/><circle cx="21.6" cy="21.6" r="2.6" fill="#ee1c24"/></svg>
<svg class="b" style="left:524.0px;top:207.0px;" width="44" height="44" viewBox="0 0 44 44"><path d="M15 4L40.6 7.6 33.4 39.6 3.6 31z" fill="#8c8a79" stroke="#000" stroke-width="1.4" stroke-linejoin="round"/><path d="M15 4l18.4 35.6L40.6 7.6z" fill="#55534a" stroke="#000" stroke-width="1.2" stroke-linejoin="round"/><path d="M15 4L3.6 31l29.8 8.6z" fill="#8c8a79" stroke="#000" stroke-width="1.2" stroke-linejoin="round"/><path d="M3.6 31L40.6 7.6" stroke="#ee1c24" stroke-width="2.2"/><circle cx="3.6" cy="31" r="2.8" fill="#ee1c24"/><circle cx="40.6" cy="7.6" r="2.8" fill="#ee1c24"/></svg>
<div class="b" style="left:0.0px;top:262.0px;width:120.0px;height:1217.0px;background:#f0f0f0;"></div>
<div class="b" style="left:0.0px;top:1478.4px;width:120.0px;height:1.2px;background:#c4c4c4;"></div>
<div class="b" style="left:119.0px;top:262.0px;width:1.2px;height:1217.0px;background:#dadada;"></div>
<div class="b" style="left:3.0px;top:264.0px;width:114.0px;height:2.4px;background:repeating-linear-gradient(90deg,#b4b4b4 0 2px,transparent 2px 4.2px);"></div>
<div class="b" style="left:4.0px;top:388.0px;width:112.0px;height:1.0px;background:#757575;"></div>
<div class="b" style="left:4.0px;top:686.0px;width:112.0px;height:1.0px;background:#757575;"></div>
<div class="b" style="left:4.0px;top:868.0px;width:112.0px;height:1.0px;background:#757575;"></div>
<div class="b" style="left:4.0px;top:1050.0px;width:112.0px;height:1.0px;background:#757575;"></div>
<div class="b" style="left:4.0px;top:1232.0px;width:112.0px;height:1.0px;background:#757575;"></div>
<div class="b" style="left:4.0px;top:1356.0px;width:112.0px;height:1.0px;background:#757575;"></div>
<svg class="b" style="left:9.0px;top:278.4px;overflow:visible;" width="42" height="42" viewBox="0 0 42 42"><path d="M14.8 7.2v24.6l5.8-5.2 4.4 9.8 3.8-1.8-4.6-9.4 7.6-.8z" fill="#000" stroke="#fff" stroke-width="1"/></svg>
<svg class="b" style="left:67.0px;top:278.4px;overflow:visible;" width="42" height="42" viewBox="0 0 42 42"><path d="M4 8.6L25.6 3l15.6 9.4-4.6 22.2L16.6 41 8.6 29z" fill="#e9e9e9"/><path d="M19 19.4l20.6-6-3.6 20.4-18.2 5.6z" fill="#d2d2d2"/><path d="M10.4 11.4l14-3.4 8 5-13 3.6z" fill="#f6f6f6"/><g fill="none" stroke="#aaa" stroke-width="2" stroke-linejoin="round"><path d="M4 8.6L25.6 3l15.6 9.4-4.6 22.2L16.6 41 8.6 29z"/><path d="M4 8.6l15 10.8 22.2-7M19 19.4L16.6 41"/></g><g fill="none" stroke="#b8b8b8" stroke-width="1.3"><path d="M7.4 11l13.6 9.6 17.4-5.2M9 14.6l3.6 13.400000000000002M25.2 5.6l-1.6 11"/></g><path d="M12 20l6.4 5.4v11L12.6 29z" fill="#f2f2f2" stroke="#b4b4b4"/><path d="M21.6 25l5.4-1.8v7.6l5.6-1.8" fill="none" stroke="#fff" stroke-width="2.4"/></svg>
<svg class="b" style="left:9.0px;top:336.5px;overflow:visible;" width="42" height="42" viewBox="0 0 42 42"><path d="M28.6 9.6c3.6-5.2 10.4-3.2 10.6 2.6.2 4.6-3 7.4-5 10.4" fill="none" stroke="#000" stroke-width="2.4"/><path d="M11.5 19.5L32 9l8.4 21.4c-2.6 6-12.6 9.6-18.4 7.600000000000001z" fill="#d6cc98" stroke="#000" stroke-width="1.5"/><path d="M28.6 11.6l9 22" stroke="#5a5c60" stroke-width="4.4"/><path d="M17.6 35l22.4-9" stroke="#5a5c60" stroke-width="3.6"/><ellipse cx="19.6" cy="13.4" rx="14.4" ry="9" transform="rotate(-33 19.6 13.4)" fill="#8ca6aa" stroke="#000" stroke-width="1.3"/><ellipse cx="19.6" cy="13.4" rx="14.4" ry="9" transform="rotate(-33 19.6 13.4)" fill="none" stroke="#5a5c60" stroke-width="3.4"/><ellipse cx="19.6" cy="13.4" rx="16.1" ry="10.7" transform="rotate(-33 19.6 13.4)" fill="none" stroke="#000" stroke-width="1.3"/><path d="M25.6 14.8C20 13 9.6 15.6 5 22c-4.4 6.4-2.6 14.6 2.6 20.4 3.4-.8 4.6-5 4.4-10.2-.2-6.2 3.2-9 9-11 5-1.8 7.8-4.2 4.6-6.4z" fill="#f9b900" stroke="#000" stroke-width="1.5" stroke-linejoin="round"/><circle cx="32.4" cy="21.4" r="1.7" fill="#000"/></svg>
<svg class="b" style="left:67.0px;top:336.5px;overflow:visible;" width="42" height="42" viewBox="0 0 42 42"><path d="M5.4 18.8L25 1.4 40.4 5.8 24.4 27.6z" fill="#fb9cb4" stroke="#000" stroke-width="1.6" stroke-linejoin="round"/><path d="M5.4 18.8l19 8.8L20 42.6 1.6 31.4z" fill="#fc88a6" stroke="#000" stroke-width="1.6" stroke-linejoin="round"/><path d="M24.4 27.6l16-21.8-3.8 13.4L20 42.6z" fill="#c25478" stroke="#000" stroke-width="1.6" stroke-linejoin="round"/><path d="M6.4 19.4l18 8.2 15-20.4" fill="none" stroke="#fff" stroke-width="1"/><text transform="translate(21.6 20.6) rotate(-56)" font-family="Liberation Serif,serif" font-size="9.5" fill="#50101e">pink</text></svg>
<svg class="b" style="left:9.0px;top:401.7px;overflow:visible;" width="42" height="42" viewBox="0 0 42 42"><path d="M9 29.6L33 4.6c2.4-2.2 7.4 2.2 5.2 5.2L14.6 35z" fill="#e4101c" stroke="#000" stroke-width="1.5" stroke-linejoin="round"/><path d="M12 30.4L35 6.4" stroke="#7a0810" stroke-width="2"/><path d="M33 4.6c2.4-2.2 7.4 2.2 5.2 5.2l-2.4 2.4-5.2-5z" fill="#d4848c" stroke="#000" stroke-width="1.2"/><path d="M9 29.6l5.6 5.4-10.8 6z" fill="#d8d0a0" stroke="#000" stroke-width="1.2" stroke-linejoin="round"/><path d="M3.8 41l3.6-2-1.8-1.6z" fill="#000"/></svg>
<svg class="b" style="left:67.0px;top:401.7px;overflow:visible;" width="42" height="42" viewBox="0 0 42 42"><path d="M3.6 40C2 30 6 26.4 12 26.4c9 0 13 10.6 21 9.6 7-1 4.6-11-3-15.6C21 15 6.6 14 6.6 8.6 6.6 3 20 3.6 28 6.6c6 2.2 12 .2 10.4-5.4" fill="none" stroke="#000" stroke-width="4.8" stroke-linecap="round"/><path d="M3.6 40C2 30 6 26.4 12 26.4c9 0 13 10.6 21 9.6 7-1 4.6-11-3-15.6C21 15 6.6 14 6.6 8.6 6.6 3 20 3.6 28 6.6c6 2.2 12 .2 10.4-5.4" fill="none" stroke="#ea141c" stroke-width="2.8" stroke-linecap="round"/><circle cx="3.6" cy="40.2" r="3.3" fill="#f0101c"/><circle cx="38.4" cy="1.4" r="3.3" fill="#f0101c"/></svg>
<svg class="b" style="left:9.0px;top:459.3px;overflow:visible;" width="42" height="42" viewBox="0 0 42 42"><rect x="7" y="4.6" width="29.4" height="34.4" fill="#a8a592" stroke="#000" stroke-width="1.4"/><path d="M7.4 38.9L35.6 4.6" stroke="#fff" stroke-width="4.6"/><path d="M7.4 38.9L35.6 4.6" stroke="#f0101c" stroke-width="1.8"/><circle cx="7.4" cy="38.9" r="2.6" fill="#f0101c"/><circle cx="35.6" cy="4.6" r="2.6" fill="#f0101c"/></svg>
<svg class="b" style="left:67.0px;top:459.3px;overflow:visible;" width="42" height="42" viewBox="0 0 42 42"><rect x="6.6" y="4.6" width="29.6" height="34.4" fill="#a8a592" stroke="#000" stroke-width="1.4"/><path d="M6.6 4.6v8c16 0 29.6 12 29.6 26.4H6.6" fill="none" stroke="#fff" stroke-width="4.4"/><path d="M6.6 4.6v34.3h29.6C36.2 24.6 22.6 12.6 6.6 12.6" fill="none" stroke="#f0101c" stroke-width="1.7"/><circle cx="6.6" cy="4.6" r="2.4" fill="#f0101c"/><circle cx="6.6" cy="12.6" r="2.4" fill="#f0101c"/><circle cx="6.6" cy="38.9" r="2.6" fill="#f0101c"/><circle cx="36.2" cy="38.9" r="2.6" fill="#f0101c"/></svg>
<svg class="b" style="left:9.0px;top:517.8px;overflow:visible;" width="42" height="42" viewBox="0 0 42 42"><circle cx="21.4" cy="21" r="19.4" fill="#a8a592" stroke="#000" stroke-width="1.4"/><path d="M21 21L35.4 7.4" stroke="#fff" stroke-width="4.6"/><circle cx="21" cy="21" r="4.2" fill="#fff"/><path d="M21 21L35.4 7.4" stroke="#f0101c" stroke-width="1.8"/><circle cx="21" cy="21" r="2.6" fill="#f0101c"/><circle cx="35.4" cy="7.4" r="2.6" fill="#f0101c"/></svg>
<svg class="b" style="left:67.0px;top:517.8px;overflow:visible;" width="42" height="42" viewBox="0 0 42 42"><circle cx="21" cy="21" r="19.4" fill="none" stroke="#f0101c" stroke-width="1.3"/><path d="M12 5.2l22.6 3.4 5.6 18-22.6 12.8L2.8 23z" fill="#a8a592" stroke="#000" stroke-width="1.4" stroke-linejoin="round"/><path d="M21 21L34.6 8.6" stroke="#fff" stroke-width="4.6"/><circle cx="21" cy="21" r="4.2" fill="#fff"/><path d="M21 21L34.6 8.6" stroke="#f0101c" stroke-width="1.8"/><circle cx="21" cy="21" r="2.6" fill="#f0101c"/><circle cx="34.6" cy="8.6" r="2.6" fill="#f0101c"/></svg>
<svg class="b" style="left:9.0px;top:576.3px;overflow:visible;" width="42" height="42" viewBox="0 0 42 42"><path d="M39.4 3.6C40 24 24 37 6 37.4" fill="none" stroke="#000" stroke-width="1.8"/><path d="M6 3.6h33.4L6 37.4" fill="none" stroke="#f0101c" stroke-width="1.7"/><circle cx="6" cy="3.6" r="3.2" fill="#f0101c"/><circle cx="39.4" cy="3.6" r="3.2" fill="#f0101c"/><circle cx="6" cy="37.4" r="3.2" fill="#f0101c"/></svg>
<svg class="b" style="left:67.0px;top:576.3px;overflow:visible;" width="42" height="42" viewBox="0 0 42 42"><path d="M12.4 37C2 30 2 14 10.4 7.4 20-1 33 1 39.6 8.6" fill="none" stroke="#000" stroke-width="1.8"/><path d="M12.4 37L39.6 8.6M10.4 7.4l15 15.6" fill="none" stroke="#f0101c" stroke-width="1.8"/><circle cx="12.4" cy="37" r="3.2" fill="#f0101c"/><circle cx="39.6" cy="8.6" r="3.2" fill="#f0101c"/><circle cx="10.4" cy="7.4" r="3.2" fill="#f0101c"/></svg>
<svg class="b" style="left:9.0px;top:633.9px;overflow:visible;" width="42" height="42" viewBox="0 0 42 42"><path d="M17.6 3.4C30 .6 42 9 42.6 21 43 33 30 42 17 37.6c-6-2-9-6-10.4-9.6" fill="none" stroke="#000" stroke-width="1.8"/><path d="M17.6 3.4l19 32-30-7.4" fill="none" stroke="#f0101c" stroke-width="1.7"/><circle cx="17.6" cy="3.4" r="3.2" fill="#f0101c"/><circle cx="36.6" cy="35.4" r="3.2" fill="#f0101c"/><circle cx="6.6" cy="28" r="3.2" fill="#f0101c"/></svg>
<svg class="b" style="left:67.0px;top:633.9px;overflow:visible;" width="42" height="42" viewBox="0 0 42 42"><path d="M6.6 7.6h31.6C38 24 24 36 6.6 36.6z" fill="#a8a592"/><path d="M38.2 7.6C38 24 24 36 9 36.6M6.6 7.6v29" fill="none" stroke="#000" stroke-width="1.6"/><path d="M6.6 4.6h31.6L6.6 36.6" fill="none" stroke="#fff" stroke-width="4.4"/><path d="M6.6 4.6h31.6L6.6 36.6" fill="none" stroke="#f0101c" stroke-width="1.7"/><circle cx="6.6" cy="4.6" r="2.6" fill="#f0101c"/><circle cx="38.2" cy="4.6" r="2.6" fill="#f0101c"/><circle cx="6.6" cy="36.6" r="2.6" fill="#f0101c"/></svg>
<svg class="b" style="left:9.0px;top:699.6px;overflow:visible;" width="42" height="42" viewBox="0 0 42 42"><g transform="translate(22,21)"><rect x="-8" y="-8" width="16" height="16" fill="#fff"/><path d="M-8-8h4v4h-4zM4-8h4v4H4zM-8 4h4v4h-4zM4 4h4v4H4zM-2-2h4v4h-4z" fill="#c8c8c8"/><path d="M0-19.6l6.8 11H3v3.4c0 3.8-6 3.8-6 0v-3.4h-3.800000000000001z" fill="#f0101c" stroke="#9a0008" stroke-width=".7" stroke-linejoin="round" transform="rotate(0)"/><path d="M0-19.6l6.8 11H3v3.4c0 3.8-6 3.8-6 0v-3.4h-3.800000000000001z" fill="#f0101c" stroke="#9a0008" stroke-width=".7" stroke-linejoin="round" transform="rotate(90)"/><path d="M0-19.6l6.8 11H3v3.4c0 3.8-6 3.8-6 0v-3.4h-3.800000000000001z" fill="#f0101c" stroke="#9a0008" stroke-width=".7" stroke-linejoin="round" transform="rotate(180)"/><path d="M0-19.6l6.8 11H3v3.4c0 3.8-6 3.8-6 0v-3.4h-3.800000000000001z" fill="#f0101c" stroke="#9a0008" stroke-width=".7" stroke-linejoin="round" transform="rotate(270)"/></g></svg>
<svg class="b" style="left:67.0px;top:699.6px;overflow:visible;" width="42" height="42" viewBox="0 0 42 42"><path d="M.6 25.4l19.8-5 21.4 6-23.2 10z" fill="#a09e8a" stroke="#000" stroke-width="1.4" stroke-linejoin="round"/><path d="M.6 25.4l18 11 .2 5.400000000000002L1.6 30z" fill="#55534a" stroke="#000" stroke-width="1.4" stroke-linejoin="round"/><path d="M18.6 36.4l23.2-10-.6 5-22.4 10.4z" fill="#77756a" stroke="#000" stroke-width="1.4" stroke-linejoin="round"/><path d="M20.6 1.200000000000001l7.6 11.600000000000001h-4.200000000000001V27.6h-6.6V12.8H13.2z" fill="#fff" stroke="#fff" stroke-width="3.4" stroke-linejoin="round"/><path d="M20.6 1.2l7.6 11.6h-4.2V27.6h-6.6V12.8H13.2z" fill="#f0101c" stroke="#7a0008" stroke-width=".8" stroke-linejoin="round"/></svg>
<svg class="b" style="left:9.0px;top:757.7px;overflow:visible;" width="42" height="42" viewBox="0 0 42 42"><g transform="translate(22.2,21)"><g transform="rotate(0)"><path d="M-12.6-3.4A13 13 0 0 1 10-8.4" fill="none" stroke="#9a0008" stroke-width="7" stroke-linecap="round"/><path d="M12.7-16.1L19.200000000000003 0 4.3-5.4z" fill="#f0101c" stroke="#9a0008" stroke-width=".9" stroke-linejoin="round"/><path d="M-12.6-3.4A13 13 0 0 1 10-8.4" fill="none" stroke="#f0101c" stroke-width="5.8" stroke-linecap="round"/></g><g transform="rotate(180)"><path d="M-12.6-3.4A13 13 0 0 1 10-8.4" fill="none" stroke="#9a0008" stroke-width="7" stroke-linecap="round"/><path d="M12.7-16.1L19.200000000000003 0 4.3-5.4z" fill="#f0101c" stroke="#9a0008" stroke-width=".9" stroke-linejoin="round"/><path d="M-12.6-3.4A13 13 0 0 1 10-8.4" fill="none" stroke="#f0101c" stroke-width="5.8" stroke-linecap="round"/></g></g></svg>
<svg class="b" style="left:67.0px;top:757.7px;overflow:visible;" width="42" height="42" viewBox="0 0 42 42"><path d="M2.6 21C2 10 12 1.6 25 1.4c9-.2 16 3.600000000000001 17 9.600000000000001l-4 10-5-4C31 11 25 9 19 11c-6 2-8 8-6 14l6 12.6-6.4 3.400000000000002C6 37 3 30 2.6 21z" fill="#8c8a79" stroke="#000" stroke-width="1.5" stroke-linejoin="round"/><path d="M8 13c4-6 12-9 20-8" fill="none" stroke="#000" stroke-width="1"/><path d="M33 17l5-11M13 25l-9 4M19 37.6l-9-9" stroke="#000" stroke-width="1" fill="none"/><path d="M12.6 41l6.4-3.4L13 25c-1-4 0-8 3-11l-5-4C5 16 4 26 8 34z" fill="#6a685a" stroke="#000" stroke-width="1"/><path d="M13 22c1-8 8-13 16-12l1-3.600000000000001 8 8-10 5.600000000000001 1-4c-4-.4-7 1.6-8 5.400000000000002l8-2-2 5 5 1.6-3.4 5.400000000000002C20 32.6 14 29 13 22z" fill="#d8202c" stroke="#000" stroke-width="1.2" stroke-linejoin="round"/></svg>
<svg class="b" style="left:9.0px;top:815.7px;overflow:visible;" width="42" height="42" viewBox="0 0 42 42"><rect x="2.3" y=".5" width="41.1" height="41.1" fill="none" stroke="#f0101c" stroke-width="1.2"/><rect x="2.3" y="11.2" width="31" height="30.4" fill="#908e7c" stroke="#000" stroke-width="1.5"/><path d="M44.6 0L26.4 4.200000000000001l5 5-10.600000000000001 9.400000000000002 7.6 8.2 10.4-10 4.800000000000001 4.6z" fill="#fff" stroke="#fff" stroke-width="3.6" stroke-linejoin="round"/><path d="M44.6 0L26.4 4.2l5 5-10.6 9.4 7.6 8.2 10.4-10 4.8 4.6z" fill="#f0101c" stroke="#000" stroke-width="1.5" stroke-linejoin="round"/></svg>
<svg class="b" style="left:67.0px;top:815.7px;overflow:visible;" width="42" height="42" viewBox="0 0 42 42"><path d="M-.6 7.6C14-4 34 1 38.6 20c1.600000000000001 8-1 15-6 20" fill="none" stroke="#f0101c" stroke-width="1.8"/><path d="M3.6 23.6c1-8 7-12 14-12M20.6 34c6-2 8-8 8-15" fill="none" stroke="#000" stroke-width="1.9"/><path d="M37.6 4L19.6 8.6l4.800000000000001 4.600000000000001-8.4 7.800000000000001 7 7.6 8.600000000000001-8.200000000000001 4.6 4.4z" fill="#f0101c" stroke="#000" stroke-width="1.5" stroke-linejoin="round"/></svg>
<svg class="b" style="left:9.0px;top:880.6px;overflow:visible;" width="42" height="42" viewBox="0 0 42 42"><path d="M6 32.6l14-8.2 3.4 6L9.4 39z" fill="#f8e800" stroke="#000" stroke-width="1.4" stroke-linejoin="round"/><path d="M4.6 31.6l5 9.200000000000001-3 1.6c-3-2-4.6-6-4-9.6z" fill="#111"/><path d="M19 8C21 4 30 0 36 1.6l3.600000000000001 3 .8 18c-1 4-10 8-15.4 8L17.6 27c-2-5-1-14 1.4-19z" fill="#1a1a1a" stroke="#000" stroke-width="1.4" stroke-linejoin="round"/><path d="M25.6 9.6C28 5 34 2 38.4 3.6c2 6 2 14 1 19-3 4-9 6.6-14 6-3-6-2.6-14 .2-19z" fill="#9c9c9c" stroke="#000" stroke-width="1"/><ellipse cx="32.8" cy="15.6" rx="4.6" ry="8" transform="rotate(14 32.8 15.6)" fill="#f8ec00" stroke="#6a6a00" stroke-width=".6"/><path d="M18.6 14l5 15" stroke="#f8e800" stroke-width="1.6"/></svg>
<svg class="b" style="left:67.0px;top:880.6px;overflow:visible;" width="42" height="42" viewBox="0 0 42 42"><g stroke="#000" stroke-width="1.5" fill="none"><path d="M9 26L25.6 9.400000000000002M4 19.6l9 10.4M19.6 3l10 10.4M9 26l13.6 12.8M25.6 9.4L38 21.6"/><path d="M5.6 28.6l6.8-5.2M22 12l6.800000000000001-5.2" stroke-width="2.2"/></g><circle cx="22.4" cy="38.6" r="2.2" fill="#20c030"/><circle cx="38.6" cy="21.4" r="2.2" fill="#20c030"/><text transform="translate(10.6 16.6) rotate(-42)" font-family="Liberation Serif,serif" font-size="15" fill="#000">3</text></svg>
<svg class="b" style="left:9.0px;top:939.3px;overflow:visible;" width="42" height="42" viewBox="0 0 42 42"><path d="M15 42C4 38 .6 28 3 19.6 7 8 22 2.4 42.6 4z" fill="#f4e420" stroke="#000" stroke-width="1.6" stroke-linejoin="round"/><path d="M16.6 33C11 30 9.6 25 11.6 20 14 14 22 10.6 33 11z" fill="#f0f0f0" stroke="#000" stroke-width="1.3" stroke-linejoin="round"/><path d="M14.6 39.6C6 35 4 28 6 20.6 9 12 22 6.6 38.6 7" fill="none" stroke="#000" stroke-width=".8" stroke-dasharray="1.6 1.6"/><path d="M17 39L39 7.6" stroke="#000" stroke-width=".8" stroke-dasharray="1.6 1.6"/></svg>
<svg class="b" style="left:67.0px;top:939.3px;overflow:visible;" width="42" height="42" viewBox="0 0 42 42"><rect x="14.6" y="1" width="27.6" height="24.4" fill="#fff" stroke="#000" stroke-width="1.5"/><text x="28.6" y="19" font-family="Liberation Serif,serif" font-size="16.5" text-anchor="middle" fill="#000">A1</text><path d="M14.6 13H9.6v18" fill="none" stroke="#000" stroke-width="1.5"/><path d="M9.6 39l-4.2-9.4h8.4z" fill="#000"/></svg>
<svg class="b" style="left:9.0px;top:998.0px;overflow:visible;" width="42" height="42" viewBox="0 0 42 42"><path d="M19.6 22.6V8" stroke="#1848a8" stroke-width="3"/><path d="M19.6 1l4.4 10.6h-8.8z" fill="#1848a8"/><path d="M19.6 22.6l13 7.400000000000002" stroke="#d81818" stroke-width="2.6"/><path d="M38.6 33.6l-10.600000000000001-1 4-6.6z" fill="#d81818"/><path d="M19.6 22.6l13-7.2" stroke="#28983c" stroke-width="2.6"/><path d="M38.6 11.6l-6.200000000000001 8-4-6.4z" fill="#28983c"/><path d="M19.6 24v14" stroke="#1848a8" stroke-width="2" stroke-dasharray="2 2.2"/><path d="M17 21L7.6 15.6" stroke="#d81818" stroke-width="2" stroke-dasharray="2 2.2"/><path d="M17 24.6L8 30" stroke="#28983c" stroke-width="2" stroke-dasharray="2 2.2"/><circle cx="19.6" cy="22.6" r="3.2" fill="#000"/></svg>
<svg class="b" style="left:67.0px;top:998.0px;overflow:visible;" width="42" height="42" viewBox="0 0 42 42"><g transform="skewX(14) translate(-8,0)"><text x="22" y="38" font-family="Liberation Serif,serif" font-weight="bold" font-size="50" text-anchor="middle" fill="#2e2d26" stroke="#000" stroke-width="1.6" transform="translate(3.6,2.6)">A</text><text x="22" y="38" font-family="Liberation Serif,serif" font-weight="bold" font-size="50" text-anchor="middle" fill="#8c8a79" stroke="#000" stroke-width="1.1">A</text></g></svg>
<div class="b" style="left:2.4px;top:1056.4px;width:57.4px;height:56.4px;background:#c9e0f7;border:1.2px solid #9bcaf0;"></div>
<svg class="b" style="left:9.0px;top:1064.0px;overflow:visible;" width="42" height="42" viewBox="0 0 42 42"><path d="M22 9.4c10 0 18 3 18 8.6v8c0 4-5 7-12 8l-4-5 4-3.6c5-.6 7-2.6 7-4.4 0-2.400000000000002-6-4.6-13-4.6z" fill="#1f8c3c" stroke="#000" stroke-width="1.1" stroke-linejoin="round"/><path d="M22 9.4c10 0 18 3 18 8.6 0-2.4-6-5-14-5.400000000000002L27 16l-8-4.6 7-5 .4 3z" fill="#7ed09c" stroke="#000" stroke-width="1.1" stroke-linejoin="round"/><path d="M20 13c-4 .4-8 1-11 2.600000000000001l-2-3c-3 1.6-4.600000000000001 3.6-4.600000000000001 5.800000000000001 3-3 9-5 17.6-5.400000000000002z" fill="#c85040" stroke="#000" stroke-width="1"/><path d="M2.4 18.4v8c0 5.6 8 9.6 18 10v4.200000000000003l10-8-10-8v4c-8-.4-13.400000000000002-3-14-6-.6-2 1-3.6 3-4.6l-2.4-3C4 16.6 2.4 17 2.4 18.4z" fill="#c8102c" stroke="#000" stroke-width="1.1" stroke-linejoin="round"/><path d="M22.6 1.600000000000001v38.8" stroke="#000" stroke-width="3.4" stroke-linecap="round"/></svg>
<svg class="b" style="left:67.0px;top:1064.0px;overflow:visible;" width="42" height="42" viewBox="0 0 42 42"><path d="M4 38c2-8 5-14 8-19l4-10c1-3 4.4-2 4 1l2-6c1-3 4.6-2.4 4.4.8l2.2-3.4c2-2.6 5-1 4.200000000000003 2l2-1c3-1.2 4.4 1.4 3 4L31.6 21l5-2.4c3-1.4 5.4 1.4 2.600000000000001 3.8L30 30c-4 3-8 5-12 11z" fill="#f6e2b4" stroke="#c8aa78" stroke-width="1" stroke-linejoin="round"/><path d="M16.6 10l-2 8M22 5l-2 11M26.4 4.6l-3 11.4M30.6 6.6l-4 10" stroke="#d8c090" stroke-width=".9"/><ellipse cx="20" cy="14" rx="2" ry="1.2" fill="#f8f0a0"/><ellipse cx="25" cy="14.6" rx="2" ry="1.2" fill="#f8f0a0"/></svg>
<svg class="b" style="left:9.0px;top:1121.8px;overflow:visible;" width="42" height="42" viewBox="0 0 42 42"><path d="M20.2 22.1L5.6 38.0" stroke="#1a1a1a" stroke-width="5.4" stroke-linecap="round"/><circle cx="28" cy="13.6" r="10.6" fill="#8fb0d8" stroke="#111" stroke-width="2.6"/><circle cx="28" cy="13.6" r="8.2" fill="none" stroke="#a8ccf0" stroke-width="1.6"/><circle cx="24.8" cy="10.4" r="2.3" fill="#cfe4fa"/></svg>
<svg class="b" style="left:67.0px;top:1121.8px;overflow:visible;" width="42" height="42" viewBox="0 0 42 42"><rect x="4.6" y="3.6" width="37" height="36.4" fill="none" stroke="#f0101c" stroke-width="2.2"/><path d="M21.0 22.0L6.0 38.0" stroke="#1a1a1a" stroke-width="5.4" stroke-linecap="round"/><circle cx="29" cy="13.6" r="10.6" fill="#8fb0d8" stroke="#111" stroke-width="2.6"/><circle cx="29" cy="13.6" r="8.2" fill="none" stroke="#a8ccf0" stroke-width="1.6"/><circle cx="25.8" cy="10.4" r="2.3" fill="#cfe4fa"/></svg>
<svg class="b" style="left:9.0px;top:1179.0px;overflow:visible;" width="42" height="42" viewBox="0 0 42 42"><path d="M16.2 28.4L6.0 38.6" stroke="#1a1a1a" stroke-width="5.4" stroke-linecap="round"/><circle cx="23" cy="21.6" r="8.6" fill="#8fb0d8" stroke="#111" stroke-width="2.6"/><circle cx="23" cy="21.6" r="6.2" fill="none" stroke="#a8ccf0" stroke-width="1.6"/><circle cx="20.4" cy="19.0" r="1.9" fill="#cfe4fa"/><path d="M0-9l6 8.6h-3.4v6.4h-5.2v-6.4H-6z" fill="#f0101c" stroke="#9a0008" stroke-width=".8" stroke-linejoin="round" transform="translate(9.6,7.6) rotate(-45)"/><path d="M0-9l6 8.6h-3.4v6.4h-5.2v-6.4H-6z" fill="#f0101c" stroke="#9a0008" stroke-width=".8" stroke-linejoin="round" transform="translate(37,7.6) rotate(45)"/><path d="M0-9l6 8.6h-3.4v6.4h-5.2v-6.4H-6z" fill="#f0101c" stroke="#9a0008" stroke-width=".8" stroke-linejoin="round" transform="translate(37,35.6) rotate(135)"/></svg>
<svg class="b" style="left:67.0px;top:1179.0px;overflow:visible;" width="42" height="42" viewBox="0 0 42 42"><circle cx="10" cy="17" r="10" fill="#8fb0d8" stroke="#111" stroke-width="2.4"/><path d="M5 15.6l12-10.600000000000001v5.4c10-1 16 4 17.6 12.600000000000001 0 4-2 8-5 10l-10 .6 4-4c2-6-1-9-6.6-9v5.4z" fill="#1f8fe8" stroke="#000" stroke-width="1.3" stroke-linejoin="round"/><path d="M21 24.6l18 14" stroke="#1a1a1a" stroke-width="5.4" stroke-linecap="round"/></svg>
<svg class="b" style="left:9.0px;top:1245.0px;overflow:visible;" width="42" height="42" viewBox="0 0 42 42"><circle cx="22" cy="6" r="2.8" fill="#fff" stroke="#000" stroke-width="1.2"/><path d="M19.6 10.6h4.800000000000001c2 0 3 3 3.6 8l1 7.400000000000002-2 .6-1-5 .6 8-1.400000000000002 7-2.2.4-1-9-1 9-2.2-.4-1.400000000000002-7 .6-8-1 5-2-.6 1-7.4c.6-5 1.6-8 3.600000000000001-8z" fill="#fff" stroke="#000" stroke-width="1.2" stroke-linejoin="round"/><path d="M12.6 33l18.8 9M31.4 33l-18.8 9" stroke="#f0101c" stroke-width="1.6"/></svg>
<svg class="b" style="left:67.0px;top:1245.0px;overflow:visible;" width="42" height="42" viewBox="0 0 42 42"><path d="M3 23c6-9 14-13 22-12 6 1 10 4 14 10-3 2-6 3-8 3.600000000000001-6 5-14 6-21 2.400000000000002-3-1-5-2-7-4z" fill="#fff" stroke="#222" stroke-width="1"/><path d="M2 19C8 10 18 6 27 8c5 1 9 4 12 8" fill="none" stroke="#111" stroke-width="2.8"/><circle cx="19" cy="19" r="7.4" fill="#2a2a2a"/><circle cx="19" cy="19" r="3.4" fill="#000"/><circle cx="16.4" cy="16.2" r="2.2" fill="#fff"/><g stroke="#8a8a8a" stroke-width=".8"><path d="M30 26l6 5M27 28l4 6M22 29l2 7M34 24l6 3M14 28l-2 5M18 29.6v6M33 12l5-4M28 9l3-5M36 16l5-2"/></g></svg>
<svg class="b" style="left:9.0px;top:1302.9px;overflow:visible;" width="42" height="42" viewBox="0 0 42 42"><g fill="#1c1c1c"><path d="M5.6 16c0-7 5-10 8.6-7 3 2.600000000000001 2 9 1 15l-7 1.6c-1.6-3-2.6-6-2.6-9.6z"/><path d="M8.6 28l7-1.6c1 4 0 8.600000000000001-3 9.600000000000001-3 .6-4-4-4-8z"/><path d="M24 10.6c2-6 7-8 10-4.600000000000001 3 3.6-.4 10-3 15l-7-1c-1-3-1-6 0-9.4z"/><path d="M23.6 22.6l7 1c-.6 4-3 8-6 7.6-3-.6-2-5-1-8.6z"/></g><path d="M8.4 25.6l7-1.6M23.8 20.6l7 1" stroke="#fff" stroke-width="1.3"/><path d="M9 27l6.6-1.4M23.600000000000005 22l7 1" stroke="#fff" stroke-width=".6"/></svg>
<svg class="b" style="left:67.0px;top:1302.9px;overflow:visible;" width="42" height="42" viewBox="0 0 42 42"><circle cx="20" cy="21" r="13" fill="#fff" stroke="#000" stroke-width="1.5"/><path d="M1.6 21h36" stroke="#000" stroke-width="2.8"/><path d="M21 3l18.4 18L21 39v-5.4L32.4 21 21 8.4z" fill="#000"/><rect x="9" y="19.6" width="22" height="2.8" fill="#000"/><text x="19.6" y="17.6" font-family="Liberation Serif,serif" font-size="9.5" text-anchor="middle" fill="#000">C</text><text x="19.6" y="31" font-family="Liberation Serif,serif" font-size="8" text-anchor="middle" fill="#000">A-5</text></svg>
<svg class="b" style="left:9.0px;top:1369.0px;overflow:visible;" width="42" height="42" viewBox="0 0 42 42"><path d="M3 17.6l14-7 22 5-15 9z" fill="#4a483e" stroke="#000" stroke-width="1.2" stroke-linejoin="round"/><g transform="translate(8.6,1) scale(0.66)"><path d="M1.1 4.7L23.5 1.6l14.2 8.7-1.3 17L10.9 39.9z" fill="#fb000d" stroke="#1a0000" stroke-width="1.7" stroke-linejoin="round"/><path d="M20.1 5.6l9.3 5.8 7.2-.5-.4 13.1-10.2-5z" fill="#d80012"/><path d="M3.1 6l17.4-2.4 15.6 6.7-6.7 1.1-9.3-5.8L3.5 7.5z" fill="#dde6e6"/><path d="M6.1 16.6l14-3 4.4 2.6-6.6.6-10.3 2.6z" fill="#dde6e6"/><path d="M9.4 27.7l7.6-1.4v4l-5.7 1.5z" fill="#dde6e6"/></g><path d="M8.6 25l15.400000000000002 8V42L10 34.6z" fill="#8c8a79" stroke="#000" stroke-width="1.2" stroke-linejoin="round"/><path d="M24 33l13-8-1 9.600000000000001L24 42z" fill="#6a685a" stroke="#000" stroke-width="1.2" stroke-linejoin="round"/><path d="M8.6 25L.6 21.6l3-7 8 4z" fill="#a8a592" stroke="#000" stroke-width="1.1" stroke-linejoin="round"/><path d="M24 33l4 5.600000000000001 14-9.600000000000001-5-4z" fill="#8c8a79" stroke="#000" stroke-width="1.1" stroke-linejoin="round"/><path d="M8.6 25l15.4 8-3 5-16-9z" fill="#a8a592" stroke="#000" stroke-width="1.1" stroke-linejoin="round"/><path d="M39 15.6l3 5-5 4.4" fill="#8c8a79" stroke="#000" stroke-width="1.1" stroke-linejoin="round"/></svg>
<svg class="b" style="left:67.0px;top:1369.0px;overflow:visible;" width="42" height="42" viewBox="0 0 42 42"><path d="M3 17.6l14-7 22 5-15 9z" fill="#fff" stroke="#000" stroke-width="1.2" stroke-linejoin="round"/><g transform="translate(6,3.4) scale(0.86)"><path d="M0 11L8 1h20l8 10-18 19z" fill="#e0101c" stroke="#000" stroke-width="1.3" stroke-linejoin="round"/><path d="M0 11h12l6 19z" fill="#7e0810"/><path d="M24 11h12L18 30z" fill="#b00c18"/><path d="M12 11L18 2l6 9z" fill="#f8848c"/><path d="M12 11h12l-6 19z" fill="#c80e1a"/><path d="M0 11h36M8 1l4 10 6 19 6-19 4-10M8 1l10 1 10-1M12 11l6-9 6 9" fill="none" stroke="#000" stroke-width=".9" stroke-linejoin="round"/><path d="M23.6 3.4l4.4 4.4M28 3.4l-4.4 4.4" stroke="#fff" stroke-width="1.4"/></g><path d="M8.6 25l15.4 8V42L10 34.6z" fill="#fff" stroke="#000" stroke-width="1.2" stroke-linejoin="round"/><path d="M24 33l13-8-1 9.6L24 42z" fill="#6a685a" stroke="#000" stroke-width="1.2" stroke-linejoin="round"/><path d="M8.6 25L.6 21.6l3-7 8 4z" fill="#e0e0e0" stroke="#000" stroke-width="1.1" stroke-linejoin="round"/><path d="M24 33l4 5.6 14-9.6-5-4z" fill="#d8d8d8" stroke="#000" stroke-width="1.1" stroke-linejoin="round"/><path d="M8.6 25l15.4 8-3 5-16-9z" fill="#fff" stroke="#000" stroke-width="1.1" stroke-linejoin="round"/><path d="M39 15.6l3 5-5 4.4" fill="#fff" stroke="#000" stroke-width="1.1" stroke-linejoin="round"/></svg>
<svg class="b" style="left:9.0px;top:1427.6px;overflow:visible;" width="42" height="42" viewBox="0 0 42 42"><path d="M1.6 8.6L30 1l10 30-28 9z" fill="#fff" stroke="#f0202c" stroke-width="1.8" stroke-linejoin="round"/><path d="M1.6 8.6L30 1l2 6L3.6 15z" fill="#f0202c"/><path d="M5 10l10-2.6" stroke="#fff" stroke-width="1.4"/><path d="M6 16l7 22M4.4 15l27-7M10 28l13-4 2.6 9M26 9l6 22" fill="none" stroke="#f0202c" stroke-width="1.7"/><circle cx="13.6" cy="30.6" r="3.4" fill="none" stroke="#f0202c" stroke-width="1.3"/><path d="M17 27.6h12v-6l13 9.8-13 9.8v-6H17z" fill="#1f8fe8" stroke="#000" stroke-width="1.5" stroke-linejoin="round"/></svg>
<svg class="b" style="left:67.0px;top:1427.6px;overflow:visible;" width="42" height="42" viewBox="0 0 42 42"><g transform="translate(2.6,2.6) scale(1.0)"><path d="M0 11L8 1h20l8 10-18 19z" fill="#e0101c" stroke="#000" stroke-width="1.3" stroke-linejoin="round"/><path d="M0 11h12l6 19z" fill="#7e0810"/><path d="M24 11h12L18 30z" fill="#b00c18"/><path d="M12 11L18 2l6 9z" fill="#f8848c"/><path d="M12 11h12l-6 19z" fill="#c80e1a"/><path d="M0 11h36M8 1l4 10 6 19 6-19 4-10M8 1l10 1 10-1M12 11l6-9 6 9" fill="none" stroke="#000" stroke-width=".9" stroke-linejoin="round"/><path d="M23.6 3.4l4.4 4.4M28 3.4l-4.4 4.4" stroke="#fff" stroke-width="1.4"/></g><circle cx="33.6" cy="32.6" r="9.6" fill="#f0f0f0"/><g transform="translate(33.6,32.6)"><rect x="-1.9" y="-8.6" width="3.8" height="4.4" fill="#d81824" stroke="#5a0008" stroke-width=".5" transform="rotate(0)"/><rect x="-1.9" y="-8.6" width="3.8" height="4.4" fill="#d81824" stroke="#5a0008" stroke-width=".5" transform="rotate(45)"/><rect x="-1.9" y="-8.6" width="3.8" height="4.4" fill="#d81824" stroke="#5a0008" stroke-width=".5" transform="rotate(90)"/><rect x="-1.9" y="-8.6" width="3.8" height="4.4" fill="#d81824" stroke="#5a0008" stroke-width=".5" transform="rotate(135)"/><rect x="-1.9" y="-8.6" width="3.8" height="4.4" fill="#d81824" stroke="#5a0008" stroke-width=".5" transform="rotate(180)"/><rect x="-1.9" y="-8.6" width="3.8" height="4.4" fill="#d81824" stroke="#5a0008" stroke-width=".5" transform="rotate(225)"/><rect x="-1.9" y="-8.6" width="3.8" height="4.4" fill="#d81824" stroke="#5a0008" stroke-width=".5" transform="rotate(270)"/><rect x="-1.9" y="-8.6" width="3.8" height="4.4" fill="#d81824" stroke="#5a0008" stroke-width=".5" transform="rotate(315)"/><circle r="5.4" fill="none" stroke="#d81824" stroke-width="3"/><circle r="6.9" fill="none" stroke="#5a0008" stroke-width=".5"/><circle r="3.9" fill="#f0f0f0" stroke="#5a0008" stroke-width=".5"/></g></svg>
<div class="b" style="left:0.0px;top:1486.5px;width:2560.0px;height:43.5px;background:#f0f0f0;"></div>
<svg class="b" style="left:6.0px;top:1496.0px;" width="28" height="28" viewBox="0 0 28 28"><circle cx="14.3" cy="13.5" r="11.6" fill="#f4f4f4" stroke="#a8a8a8" stroke-width="1.6"/><path d="M14.3 20.5c-3-4.5-4.4-6.6-4.4-9a4.4 4.4 0 0 1 8.8 0c0 2.4-1.4 4.5-4.4 9z" fill="#b4b4b4"/></svg>
<svg class="b" style="left:51.0px;top:1496.0px;" width="28" height="28" viewBox="0 0 28 28"><circle cx="14.2" cy="13.5" r="11.6" fill="#fff" stroke="#000" stroke-width="2"/><circle cx="14.2" cy="8" r="2.2" fill="#000"/><path d="M10.6 12.2h7.2v5h-1.4v4.6h-4.4v-4.6h-1.4z" fill="#000"/></svg>
<div class="b" style="left:92.0px;top:1497.5px;width:1.2px;height:23.0px;background:#9a9a9a;"></div>
<span class="t" style="left:102.14px;top:1499.7px;font-size:22px;color:#000;transform:scaleX(1.0581);">Drag to orbit. Shift = Pan, Ctrl = suspend gravity.</span>
<div class="b" style="left:2034.0px;top:1497.5px;width:1.3px;height:22.5px;background:#6e6e6e;"></div>
<div class="b" style="left:2508.0px;top:1497.5px;width:46.5px;height:23.0px;background:#f0f0f0;border:1px solid #a9c5e8;border-left:none;"></div>
<div class="b" style="left:2047.5px;top:116.0px;width:461.0px;height:1406.5px;background:#f0f0f0;border:2.5px solid #99b4d1;border-top:none;box-shadow:1px 1.5px 0 0 #5a5a5a;"></div>
<div class="b" style="left:2047.5px;top:116.0px;width:461.0px;height:43.5px;background:#99b4d1;"></div>
<span class="t" style="left:2051.77px;top:130.1px;font-size:20px;color:#000;font-weight:bold;transform:scaleX(1.0195);">Default Tray</span>
<div class="b" style="left:2490.0px;top:130.0px;width:12.5px;height:13.5px;background:#c9525c;"></div>
<svg class="b" style="left:2490.0px;top:130.0px;" width="12.5" height="13.5" viewBox="0 0 12.5 13.5"><path d="M3.6 4.2l5.2 5.2M8.8 4.2l-5.2 5.2" stroke="#fff" stroke-width="1.8" fill="none"/></svg>
<div class="b" style="left:2475.5px;top:159.5px;width:29.5px;height:1361.0px;background:#f0f0f0;"></div>
<div class="b" style="left:2476.0px;top:189.0px;width:28.0px;height:30.0px;background:#cdcdcd;"></div>
<svg class="b" style="left:2476.0px;top:165.0px;" width="28" height="20" viewBox="0 0 28 20"><path d="M8.5 14.5l5.5-5.5 5.5 5.5" stroke="#505050" stroke-width="2.4" fill="none"/></svg>
<svg class="b" style="left:2476.0px;top:1495.0px;" width="28" height="20" viewBox="0 0 28 20"><path d="M8.5 6l5.5 5.5 5.5-5.5" stroke="#505050" stroke-width="2.4" fill="none"/></svg>
<div class="b" style="left:2050.5px;top:159.5px;width:424.5px;height:30.0px;background:linear-gradient(#f4f4f4,#dedede 45%,#b4b4b4);border-top:1px solid #c8c8c8;"></div>
<svg class="b" style="left:2062.0px;top:167.5px;" width="14" height="12" viewBox="0 0 14 12"><path d="M0.5 0.8h12.5l-6.2 10.6z" fill="#000"/></svg>
<span class="t" style="left:2085.06px;top:165.3px;font-size:21px;color:#000;transform:scaleX(1.0350);">Entity Info</span>
<div class="b" style="left:2447.8px;top:162.5px;width:24.5px;height:24.0px;border:1px solid #a6a6a6;background:linear-gradient(#f2f2f2,#dcdcdc);"></div>
<svg class="b" style="left:2447.8px;top:162.5px;" width="24.5" height="24" viewBox="0 0 24.5 24"><path d="M7.8 7.6l8.6 8.6M16.4 7.6l-8.6 8.6" stroke="#000" stroke-width="1.7" fill="none"/></svg>
<span class="t" style="left:2064.18px;top:204.2px;font-size:19.2px;color:#000;font-weight:bold;transform:scaleX(1.0540);">No Selection</span>
<div class="b" style="left:2055.0px;top:236.5px;width:419.0px;height:1.5px;background:#9e9e9e;"></div>
<div class="b" style="left:2050.5px;top:504.5px;width:424.5px;height:30.0px;background:linear-gradient(#f4f4f4,#dedede 45%,#b4b4b4);border-top:1px solid #c8c8c8;"></div>
<svg class="b" style="left:2062.0px;top:512.5px;" width="14" height="12" viewBox="0 0 14 12"><path d="M0.5 0.8h12.5l-6.2 10.6z" fill="#000"/></svg>
<span class="t" style="left:2085.09px;top:510.3px;font-size:21px;color:#000;transform:scaleX(1.0152);">Materials</span>
<div class="b" style="left:2447.8px;top:507.5px;width:24.5px;height:24.0px;border:1px solid #a6a6a6;background:linear-gradient(#f2f2f2,#dcdcdc);"></div>
<svg class="b" style="left:2447.8px;top:507.5px;" width="24.5" height="24" viewBox="0 0 24.5 24"><path d="M7.8 7.6l8.6 8.6M16.4 7.6l-8.6 8.6" stroke="#000" stroke-width="1.7" fill="none"/></svg>
<div class="b" style="left:2053.3px;top:539.6px;width:109.5px;height:125.2px;background:#f0f0f0;border:1px solid #adadad;"></div>
<div class="b" style="left:2054.0px;top:548.0px;width:108.2px;height:108.0px;background:#ff0000;"></div>
<div class="b" style="left:2168.4px;top:539.6px;width:262.5px;height:34.2px;background:#ffffff;border:1px solid #7a7a7a;"></div>
<span class="t" style="left:2175.08px;top:544.2px;font-size:19.5px;color:#000;transform:scaleX(0.9422);">Color A05</span>
<svg class="b" style="left:2444.0px;top:544.0px;" width="20" height="27" viewBox="0 0 20 27"><rect x="1" y="1" width="17.5" height="25" fill="#fff" stroke="#c0c0c0" stroke-width="0.8"/><path d="M3 3.5h14l-7 7.5z" fill="#000"/><rect x="1.5" y="13" width="17" height="12.5" fill="#000"/><path d="M10 15.5v7.5M6.2 19.2h7.6" stroke="#fff" stroke-width="2.2"/></svg>
<svg class="b" style="left:2437.0px;top:585.0px;" width="32" height="32" viewBox="0 0 32 32"><path d="M5 7l14-5 11 4-13 6z" fill="#2a2a26" stroke="#000" stroke-width="1.2"/><path d="M8.5 6.6l12.5-4 3 1.1-12.8 4.4zM14 8.7l12.3-4.2 2.5 .9-12.4 4.5z" fill="#e8e0a8"/><path d="M5 7l12 5v16l-12-6z" fill="#1c1c1a" stroke="#000"/><path d="M17 12l13-6v15l-13 7z" fill="#8a8264" stroke="#000"/><path d="M17 17l13-6v3.5l-13 6zM17 23.5l13-6.5v2.5l-13 6.5z" fill="#1c1c1a"/><circle cx="8" cy="23.5" r="7" fill="#fff" stroke="#000" stroke-width="1.6"/><path d="M8 19v9M3.5 23.5h9" stroke="#000" stroke-width="1.8"/></svg>
<svg class="b" style="left:2435.0px;top:624.0px;" width="38" height="38" viewBox="0 0 38 38"><rect width="38" height="38" fill="#fff"/><path d="M0 0l38 38H0z" fill="#a1b1bf"/></svg>
<div class="b" style="left:2050.5px;top:667.5px;width:424.5px;height:1.5px;background:#a0a0a0;"></div>
<div class="b" style="left:2053.0px;top:680.7px;width:61.5px;height:31.0px;background:#fbfbfb;"></div>
<div class="b" style="left:2114.3px;top:682.0px;width:56.5px;height:28.8px;background:#f0f0f0;border:1px solid #dcdcdc;border-bottom:none;"></div>
<span class="t" style="left:2056.48px;top:683.9px;font-size:20.5px;color:#000;transform:scaleX(0.8879);">Select</span>
<span class="t" style="left:2117.45px;top:686.0px;font-size:20.5px;color:#000;transform:scaleX(0.9428);">Edit</span>
<div class="b" style="left:2114.0px;top:710.3px;width:320.0px;height:1.2px;background:#dcdcdc;"></div>
<svg class="b" style="left:2439.0px;top:677.0px;" width="31" height="31" viewBox="0 0 31 31"><path d="M2.5 28.5l1.2-3.6 13-13 2.6 2.6-13 13z" fill="#f0c020" stroke="#000" stroke-width="1.4"/><path d="M9 19l8-8 2.6 2.6-8 8z" fill="#3a3a36" stroke="#000" stroke-width="1"/><path d="M15.5 9.5l6.2 6.2 1.6-1.6-1.2-1.2 5-5.2c2-2.2 1.2-4.4 0-5.4-1.2-1-3.4-1.4-5.2.4l-5.2 5.2-1.2-1.2z" fill="#3c3b37" stroke="#000" stroke-width="1.2"/></svg>
<div class="b" style="left:2053.0px;top:712.5px;width:422.0px;height:50.5px;background:#f5f5f5;"></div>
<svg class="b" style="left:2064.0px;top:722.0px;" width="26" height="26" viewBox="0 0 26 26"><path d="M2.5 13l11-10.5v6.5h9.5v8h-9.5v6.5z" fill="none" stroke="#8a8a8a" stroke-width="2"/></svg>
<svg class="b" style="left:2104.0px;top:722.0px;" width="26" height="26" viewBox="0 0 26 26"><path d="M23.5 13l-11-10.5v6.5h-9.5v8h9.5v6.5z" fill="none" stroke="#8a8a8a" stroke-width="2"/></svg>
<svg class="b" style="left:2142.0px;top:722.0px;" width="28" height="28" viewBox="0 0 28 28"><path d="M1.5 14.5l12.5-12 12.5 12" fill="none" stroke="#000" stroke-width="2.6"/><path d="M5.5 12.5v13h17v-13" fill="#fff" stroke="#000" stroke-width="2.4"/><rect x="10.5" y="15" width="7" height="10.5" fill="#000"/></svg>
<div class="b" style="left:2178.0px;top:721.4px;width:255.0px;height:27.6px;background:#fff;border:1px solid #7a7a7a;"></div>
<span class="t" style="left:2182.10px;top:724.2px;font-size:20.5px;color:#000;transform:scaleX(0.8782);">Colors</span>
<svg class="b" style="left:2409.0px;top:729.0px;" width="16" height="12" viewBox="0 0 16 12"><path d="M2.2 3.2l5.6 5.6 5.6-5.6" fill="none" stroke="#444" stroke-width="1.4"/></svg>
<svg class="b" style="left:2445.0px;top:722.0px;" width="24" height="27" viewBox="0 0 24 27"><path d="M9 1l14 12.5-14 12.5z" fill="#000"/><rect x="1" y="6" width="11.5" height="15" fill="#fff" stroke="#000" stroke-width="1.3"/><rect x="1.6" y="6.6" width="10.3" height="4" fill="#3a7bd5"/><path d="M3.5 13.8h6.5M3.5 17h6.5" stroke="#555" stroke-width="1.4"/></svg>
<div class="b" style="left:2053.0px;top:762.6px;width:422.0px;height:1.2px;background:#a0a0a0;"></div>
<div class="b" style="left:2053.0px;top:764.0px;width:394.0px;height:184.0px;background:#ffffff;"></div>
<div class="b" style="left:2056.4px;top:766.8px;width:85.2px;height:84.2px;background:#ffcccc;border:1.3px solid #9a9a9a;box-shadow:inset 0 0 0 0.8px #fff;"></div>
<div class="b" style="left:2144.3px;top:766.8px;width:85.2px;height:84.2px;background:#ff9999;border:1.3px solid #9a9a9a;box-shadow:inset 0 0 0 0.8px #fff;"></div>
<div class="b" style="left:2232.2px;top:766.8px;width:85.2px;height:84.2px;background:#ff6666;border:1.3px solid #9a9a9a;box-shadow:inset 0 0 0 0.8px #fff;"></div>
<div class="b" style="left:2320.1px;top:766.8px;width:85.2px;height:84.2px;background:#ff3333;border:1.3px solid #9a9a9a;box-shadow:inset 0 0 0 0.8px #fff;"></div>
<div class="b" style="left:2056.4px;top:854.4px;width:85.2px;height:84.2px;background:#ff0000;border:1.3px solid #9a9a9a;box-shadow:inset 0 0 0 0.8px #fff;"></div>
<div class="b" style="left:2144.3px;top:854.4px;width:85.2px;height:84.2px;background:#cc0000;border:1.3px solid #9a9a9a;box-shadow:inset 0 0 0 0.8px #fff;"></div>
<div class="b" style="left:2232.2px;top:854.4px;width:85.2px;height:84.2px;background:#990000;border:1.3px solid #9a9a9a;box-shadow:inset 0 0 0 0.8px #fff;"></div>
<div class="b" style="left:2320.1px;top:854.4px;width:85.2px;height:84.2px;background:#660000;border:1.3px solid #9a9a9a;box-shadow:inset 0 0 0 0.8px #fff;"></div>
<div class="b" style="left:2056.4px;top:942.0px;width:85.2px;height:6.0px;background:#ffccbf;border:1.3px solid #9a9a9a;border-bottom:none;box-shadow:inset 0 1.2px 0 0 #fff,inset 1.2px 0 0 0 #fff,inset -1.2px 0 0 0 #fff;"></div>
<div class="b" style="left:2144.3px;top:942.0px;width:85.2px;height:6.0px;background:#ffa58c;border:1.3px solid #9a9a9a;border-bottom:none;box-shadow:inset 0 1.2px 0 0 #fff,inset 1.2px 0 0 0 #fff,inset -1.2px 0 0 0 #fff;"></div>
<div class="b" style="left:2232.2px;top:942.0px;width:85.2px;height:6.0px;background:#ff8059;border:1.3px solid #9a9a9a;border-bottom:none;box-shadow:inset 0 1.2px 0 0 #fff,inset 1.2px 0 0 0 #fff,inset -1.2px 0 0 0 #fff;"></div>
<div class="b" style="left:2320.1px;top:942.0px;width:85.2px;height:6.0px;background:#ff5a26;border:1.3px solid #9a9a9a;border-bottom:none;box-shadow:inset 0 1.2px 0 0 #fff,inset 1.2px 0 0 0 #fff,inset -1.2px 0 0 0 #fff;"></div>
<div class="b" style="left:2447.0px;top:764.0px;width:28.0px;height:184.0px;background:#f0f0f0;"></div>
<div class="b" style="left:2447.0px;top:794.0px;width:28.0px;height:30.0px;background:#cdcdcd;"></div>
<svg class="b" style="left:2447.0px;top:770.0px;" width="28" height="20" viewBox="0 0 28 20"><path d="M8.5 14.5l5.5-5.5 5.5 5.5" stroke="#505050" stroke-width="2.4" fill="none"/></svg>
<svg class="b" style="left:2447.0px;top:925.0px;" width="28" height="20" viewBox="0 0 28 20"><path d="M8.5 5l5.5 5.5 5.5-5.5" stroke="#505050" stroke-width="2.4" fill="none"/></svg>
<div class="b" style="left:2051.0px;top:948.5px;width:424.0px;height:8.0px;background:#f0f0f0;border:1px solid #c6c6c6;"></div>
<div class="b" style="left:2050.5px;top:958.8px;width:424.5px;height:30.0px;background:linear-gradient(#f4f4f4,#dedede 45%,#b4b4b4);border-top:1px solid #c8c8c8;"></div>
<svg class="b" style="left:2062.0px;top:966.8px;" width="14" height="12" viewBox="0 0 14 12"><path d="M0.5 0.8h12.5l-6.2 10.6z" fill="#000"/></svg>
<span class="t" style="left:2085.74px;top:964.6px;font-size:21px;color:#000;transform:scaleX(1.0061);">Components</span>
<div class="b" style="left:2447.8px;top:961.8px;width:24.5px;height:24.0px;border:1px solid #a6a6a6;background:linear-gradient(#f2f2f2,#dcdcdc);"></div>
<svg class="b" style="left:2447.8px;top:961.8px;" width="24.5" height="24" viewBox="0 0 24.5 24"><path d="M7.8 7.6l8.6 8.6M16.4 7.6l-8.6 8.6" stroke="#000" stroke-width="1.7" fill="none"/></svg>
<div class="b" style="left:2053.0px;top:993.3px;width:110.0px;height:125.5px;background:#f0f0f0;border:1px solid #a0a0a0;"></div>
<div class="b" style="left:2168.4px;top:993.0px;width:262.5px;height:34.0px;background:#f0f0f0;border:1.5px solid #dedede;box-shadow:inset 0 0 0 1px #fafafa;"></div>
<div class="b" style="left:2168.4px;top:1030.7px;width:262.5px;height:86.0px;background:#f0f0f0;border:1.5px solid #dedede;box-shadow:inset 0 0 0 1px #fafafa;"></div>
<svg class="b" style="left:2444.0px;top:998.0px;" width="20" height="27" viewBox="0 0 20 27"><rect x="1" y="1" width="17.5" height="25" fill="#fff" stroke="#c0c0c0" stroke-width="0.8"/><path d="M3 3.5h14l-7 7.5z" fill="#000"/><rect x="1.5" y="13" width="17" height="12.5" fill="#000"/><path d="M10 15.5v7.5M6.2 19.2h7.6" stroke="#fff" stroke-width="2.2"/></svg>
<svg class="b" style="left:2068.0px;top:1018.0px;" width="82" height="80" viewBox="0 0 82 80"><path d="M16.5 16.5L44.6 9l22 11.6-35 11.400000000000002z" fill="#fff" stroke="#8c8c8c" stroke-width="3.4" stroke-linejoin="round"/><path d="M15.5 21.5l13.600000000000001 15.600000000000001-1.6 31L17.6 43.6z" fill="#cdcdcd" stroke="#8c8c8c" stroke-width="3.2" stroke-linejoin="round"/><path d="M34.5 39.5l33-12.600000000000001-5.4 27.6L33 68.6z" fill="#a9a9a9" stroke="#8c8c8c" stroke-width="3.4" stroke-linejoin="round"/><path d="M5.4 11.3L44.6 2l31 18.6-8.2 36.2L29.1 75.3 11.6 44.4z M5.4 11.3l24.8 24.8 45.4-15.5M30.2 36.1L29.1 75.3" fill="none" stroke="#c8c8c8" stroke-width="3.6" stroke-linejoin="round"/><circle cx="5.4" cy="11.3" r="2.8" fill="#c8c8c8"/><circle cx="44.6" cy="2" r="2.8" fill="#c8c8c8"/><circle cx="75.6" cy="20.6" r="2.8" fill="#c8c8c8"/><circle cx="67.4" cy="56.8" r="2.8" fill="#c8c8c8"/><circle cx="29.1" cy="75.3" r="2.8" fill="#c8c8c8"/><circle cx="11.6" cy="44.4" r="2.8" fill="#c8c8c8"/></svg>
<div class="b" style="left:2050.5px;top:1121.5px;width:424.5px;height:1.5px;background:#a0a0a0;"></div>
<div class="b" style="left:2053.0px;top:1134.7px;width:61.5px;height:31.0px;background:#fbfbfb;"></div>
<div class="b" style="left:2114.3px;top:1136.0px;width:58.5px;height:28.8px;background:#f0f0f0;border:1px solid #dcdcdc;border-bottom:none;"></div>
<div class="b" style="left:2172.6px;top:1136.0px;width:82.4px;height:28.8px;background:#f0f0f0;border:1px solid #dcdcdc;border-bottom:none;"></div>
<span class="t" style="left:2056.48px;top:1137.6px;font-size:20.5px;color:#000;transform:scaleX(0.8879);">Select</span>
<span class="t" style="left:2117.45px;top:1139.6px;font-size:20.5px;color:#000;transform:scaleX(0.9428);">Edit</span>
<span class="t" style="left:2178.18px;top:1139.6px;font-size:20.5px;color:#000;transform:scaleX(0.8897);">Statistics</span>
<div class="b" style="left:2114.0px;top:1164.3px;width:361.0px;height:1.2px;background:#dcdcdc;"></div>
<div class="b" style="left:2053.0px;top:1166.0px;width:422.0px;height:48.0px;background:#f5f5f5;"></div>
<div class="b" style="left:2058.0px;top:1172.5px;width:31.0px;height:34.0px;background:#f3f3f3;border-right:1px solid #b9b9b9;border-bottom:1px solid #b9b9b9;"></div>
<svg class="b" style="left:2060.0px;top:1180.0px;" width="27" height="22" viewBox="0 0 27 22"><g fill="none" stroke="#000" stroke-width="1.5"><rect x="2" y="2.5" width="5.5" height="5.5"/><rect x="2" y="13" width="5.5" height="5.5"/><path d="M10.5 3.5h7M10.5 7h5M10.5 14h7M10.5 17.5h5"/></g><path d="M21 8h5l-2.5 3.2z" fill="#000"/></svg>
<div class="b" style="left:2113.0px;top:1172.5px;width:37.0px;height:34.0px;background:#f3f3f3;border-right:1px solid #b9b9b9;border-bottom:1px solid #b9b9b9;"></div>
<svg class="b" style="left:2118.0px;top:1176.0px;" width="28" height="28" viewBox="0 0 28 28"><path d="M1.5 14.5l12.5-12 12.5 12" fill="none" stroke="#000" stroke-width="2.6"/><path d="M5.5 12.5v13h17v-13" fill="#fff" stroke="#000" stroke-width="2.4"/><rect x="10.5" y="15" width="7" height="10.5" fill="#000"/></svg>
<div class="b" style="left:2151.0px;top:1172.5px;width:22.6px;height:34.0px;background:#f3f3f3;border-right:1px solid #b9b9b9;border-bottom:1px solid #b9b9b9;"></div>
<svg class="b" style="left:2153.0px;top:1180.0px;" width="18" height="12" viewBox="0 0 18 12"><path d="M0.5 1h17l-8.5 9.5z" fill="#000"/></svg>
<div class="b" style="left:2178.0px;top:1172.5px;width:260.7px;height:34.0px;background:#fff;border:1px solid #8a8a8a;"></div>
<span class="t" style="left:2180.32px;top:1175.7px;font-size:16.2px;color:#7f7f7f;transform:scaleX(1.0563);">3D Warehouse</span>
<div class="b" style="left:2407.7px;top:1175.0px;width:1.6px;height:30.0px;background:#000;"></div>
<svg class="b" style="left:2413.0px;top:1180.0px;" width="22" height="22" viewBox="0 0 22 22"><circle cx="13" cy="8" r="5.2" fill="none" stroke="#000" stroke-width="1.8"/><path d="M9.4 11.8l-6.6 7" stroke="#000" stroke-width="2.2"/></svg>
<div class="b" style="left:2441.0px;top:1172.5px;width:33.5px;height:34.0px;background:#f3f3f3;border-bottom:1px solid #b9b9b9;"></div>
<svg class="b" style="left:2447.0px;top:1177.0px;" width="24" height="27" viewBox="0 0 26 29"><path d="M9 1l14 12.5-14 12.5z" fill="#000"/><rect x="1" y="6" width="11.5" height="15" fill="#fff" stroke="#000" stroke-width="1.3"/><rect x="1.6" y="6.6" width="10.3" height="4" fill="#3a7bd5"/><path d="M3.5 13.8h6.5M3.5 17h6.5" stroke="#555" stroke-width="1.4"/></svg>
<div class="b" style="left:2053.0px;top:1213.6px;width:422.0px;height:1.2px;background:#a0a0a0;"></div>
<div class="b" style="left:2053.0px;top:1215.0px;width:422.5px;height:306.0px;background:#ffffff;"></div>
<div class="b" style="left:2061.0px;top:1226.0px;width:107.6px;height:107.0px;background:#fff;border:1px solid #a8a8a8;"></div>
<div class="b" style="left:2059.2px;top:1227.8px;width:107.6px;height:107.0px;background:#fff;border:1px solid #a8a8a8;"></div>
<div class="b" style="left:2057.4px;top:1229.6px;width:107.6px;height:107.0px;background:#fff;border:1px solid #8c8c8c;"></div>
<svg class="b" style="left:2072.0px;top:1248.6px;" width="80" height="70" viewBox="0 0 80 70"><g transform="scale(1.065,1)"><path d="M2 36l16-4 0 30z" fill="#8e8e8e"/><path d="M7 7l14-3 3 5 34-8-2 4-30 8-8 46-2 1z" fill="#7fb2d6" stroke="#3f5f73" stroke-width="1.5"/><path d="M56 2l10-1.5-4 45-46 18 .5-50z" fill="#b59a73" stroke="#45586a" stroke-width="2"/></g></svg>
<div class="b" style="left:2061.0px;top:1348.0px;width:107.6px;height:107.0px;background:#fff;border:1px solid #a8a8a8;"></div>
<div class="b" style="left:2059.2px;top:1349.8px;width:107.6px;height:107.0px;background:#fff;border:1px solid #a8a8a8;"></div>
<div class="b" style="left:2057.4px;top:1351.6px;width:107.6px;height:107.0px;background:#fff;border:1px solid #8c8c8c;"></div>
<svg class="b" style="left:2072.0px;top:1370.6px;" width="80" height="70" viewBox="0 0 80 70"><g transform="scale(1.065,1)"><path d="M2 36l16-4 0 30z" fill="#8e8e8e"/><path d="M7 7l14-3 3 5 34-8-2 4-30 8-8 46-2 1z" fill="#7fb2d6" stroke="#3f5f73" stroke-width="1.5"/><path d="M56 2l10-1.5-4 45-46 18 .5-50z" fill="#b59a73" stroke="#45586a" stroke-width="2"/></g></svg>
<span class="t" style="left:2172.80px;top:1229.5px;font-size:16.8px;color:#000;font-weight:bold;transform:scaleX(1.0365);">Components Sampler</span>
<span class="t" style="left:2172.36px;top:1351.5px;font-size:16.8px;color:#000;font-weight:bold;transform:scaleX(1.0461);">Dynamic Components Training</span>
<div class="b" style="left:0.0px;top:1530.0px;width:2560.0px;height:70.0px;background:#1f1f1e;"></div>
<div class="b" style="left:350.0px;top:1530.0px;width:84.7px;height:70.0px;background:#4b4b4a;"></div>
<div class="b" style="left:95.7px;top:1596.5px;width:71.3px;height:3.5px;background:#76b9ed;"></div>
<div class="b" style="left:183.0px;top:1596.5px;width:71.0px;height:3.5px;background:#76b9ed;"></div>
<div class="b" style="left:350.0px;top:1596.5px;width:84.7px;height:3.5px;background:#76b9ed;"></div>
<svg class="b" style="left:29.0px;top:1552.0px;" width="27" height="27" viewBox="0 0 27 27"><path d="M0.6 4.6l10.2-1.5v9.6H0.6zM12.2 2.9L25.3 1v11.7H12.2zM0.6 14h10.2v9.6L0.6 22.1zM12.2 14h13.1v11.8l-13.1-1.9z" fill="#fff"/></svg>
<svg class="b" style="left:111.0px;top:1545.0px;" width="41" height="41" viewBox="0 0 41 41"><path d="M3 1.5h31l5 5v32.5H3z" fill="#2554c7" stroke="#1a3a94" stroke-width="1.2"/><rect x="12" y="1.5" width="18" height="11.5" fill="#d5d8de"/><rect x="23.5" y="3" width="4.2" height="8.5" fill="#2554c7"/><rect x="6.5" y="17.5" width="29" height="20" fill="#f6f2f4"/><path d="M8.5 21.5h25M8.5 25.5h25M8.5 29.5h25M8.5 33.5h10" stroke="#e0475a" stroke-width="1.6"/><rect x="20" y="30.5" width="13" height="6.5" fill="#9a9aa2"/></svg>
<svg class="b" style="left:197.0px;top:1544.0px;" width="42" height="42" viewBox="0 0 42 42"><circle cx="21" cy="21" r="19.5" fill="#db4437"/><path d="M21 21L4.1 11.2A19.5 19.5 0 0 0 17.6 40.2z" fill="#0f9d58"/><path d="M21 21l-3.4 19.2A19.5 19.5 0 0 0 37.9 11.2z" fill="#ffcd40"/><path d="M21 21L37.9 11.2A19.5 19.5 0 0 0 4.1 11.2z" fill="#db4437"/><circle cx="21" cy="21" r="9" fill="#fff"/><circle cx="21" cy="21" r="7.2" fill="#4285f4"/></svg>
<svg class="b" style="left:283.0px;top:1543.5px;" width="44" height="44" viewBox="0 0 44 44"><circle cx="21.8" cy="21.5" r="21" fill="#ffcc10"/><path d="M10.5 32.5V20a11.3 11.3 0 0 1 22.6 0v12.5l-3.4-2.6-3.8 2.6-4.1-2.6-4.1 2.6-3.8-2.6z" fill="#2b2b2b"/><ellipse cx="17.8" cy="19.3" rx="2.5" ry="3.3" fill="#ffcc10"/><ellipse cx="26.8" cy="18.3" rx="2.5" ry="3.3" fill="#ffcc10"/></svg>
<svg class="b" style="left:373.0px;top:1545.0px;" width="38" height="40" viewBox="0 0 38 40"><path d="M2 8.5L24 1l12 6.5-1.5 22.5L9 39.5z" fill="#e12a2f"/><path d="M24 1l12 6.5-1.5 22.5-4-.5z" fill="#b81c22"/><path d="M5 10.5l18-6 8.5 4.2-6 2.3-6-2.6-7 2.4 12.5 5.6-.3 4-9.7-4.2v3.4l-6.5-2.8v-4.2z" fill="#fff"/><path d="M10.5 24.5l9 3.8v3.6l-9-4z" fill="#fff"/></svg>
<svg class="b" style="left:2085.0px;top:1558.0px;" width="22" height="14" viewBox="0 0 22 14"><path d="M1.8 11.6l9-9.2 9 9.2" fill="none" stroke="#fff" stroke-width="1.6"/></svg>
<svg class="b" style="left:2122.0px;top:1550.0px;" width="32" height="30" viewBox="0 0 32 30"><path d="M1.8 5.2l25.6-3.4v24L1.8 23.4z" fill="none" stroke="#fff" stroke-width="1.5"/><path d="M8.5 13.5a5.2 5.2 0 0 1 9.2-2.4M19 15.8a5.2 5.2 0 0 1-9.4 1.8" fill="none" stroke="#fff" stroke-width="1.4"/><path d="M18.6 8v3.6h-3.6M9 21v-3.6h3.6" fill="none" stroke="#fff" stroke-width="1.4"/><circle cx="22.2" cy="22.5" r="6.3" fill="#ff9d0a"/></svg>
<svg class="b" style="left:2164.0px;top:1553.0px;" width="30" height="22" viewBox="0 0 30 22"><rect x="9.2" y="8.2" width="17.5" height="11.2" fill="none" stroke="#fff" stroke-width="1.5"/><rect x="26.7" y="11.2" width="1.8" height="5.2" fill="#fff"/><rect x="11" y="10" width="4.6" height="7.6" fill="#fff"/><path d="M3.2 1v4.4M7.2 1v4.4M1.4 5.4h7.6v3.4a3.8 3.8 0 0 1-7.6 0zM5.2 12.6v5.6h4" fill="none" stroke="#fff" stroke-width="1.5"/></svg>
<svg class="b" style="left:2210.0px;top:1554.0px;" width="28" height="26" viewBox="0 0 28 26"><path d="M2.6 22.5A19.5 19.5 0 0 1 21.6 3" fill="none" stroke="#fff" stroke-width="1.4"/><path d="M8 22.5A14 14 0 0 1 21.8 8.6" fill="none" stroke="#fff" stroke-width="1.4"/><path d="M13.5 22.5a8.4 8.4 0 0 1 8.4-8.3" fill="none" stroke="#fff" stroke-width="1.4"/><circle cx="21.2" cy="21.8" r="1.7" fill="#fff"/></svg>
<svg class="b" style="left:2248.0px;top:1552.0px;" width="30" height="26" viewBox="0 0 30 26"><path d="M2.2 8.6h4.4l5.4-5.4v19.6l-5.4-5.4H2.2z" fill="none" stroke="#fff" stroke-width="1.4"/><path d="M15.6 9a5.4 5.4 0 0 1 0 8M19 5.6a10 10 0 0 1 0 14.8M22.6 2.4a14.6 14.6 0 0 1 0 21.2" fill="none" stroke="#fff" stroke-width="1.3"/></svg>
<span class="t" style="left:2294.12px;top:1541.4px;font-size:19.6px;color:#fff;transform:scaleX(1.0100);">DEU</span>
<span class="t" style="left:2300.32px;top:1573.4px;font-size:19.6px;color:#fff;transform:scaleX(1.0720);">HU</span>
<span class="t" style="left:2382.21px;top:1541.0px;font-size:19.6px;color:#fff;transform:scaleX(1.0118);">16:47</span>
<span class="t" style="left:2358.13px;top:1573.4px;font-size:19.6px;color:#fff;transform:scaleX(1.0005);">19.04.2022</span>
<svg class="b" style="left:2487.0px;top:1550.0px;" width="30" height="30" viewBox="0 0 30 30"><path d="M1.8 1.8h26v20.4h-9.4l-3.6 4-3.6-4H1.8z" fill="none" stroke="#fff" stroke-width="1.6"/></svg>
<div class="b" style="left:2551.5px;top:1530.0px;width:1.5px;height:70.0px;background:#6a6a6a;"></div>
</div></body></html>
